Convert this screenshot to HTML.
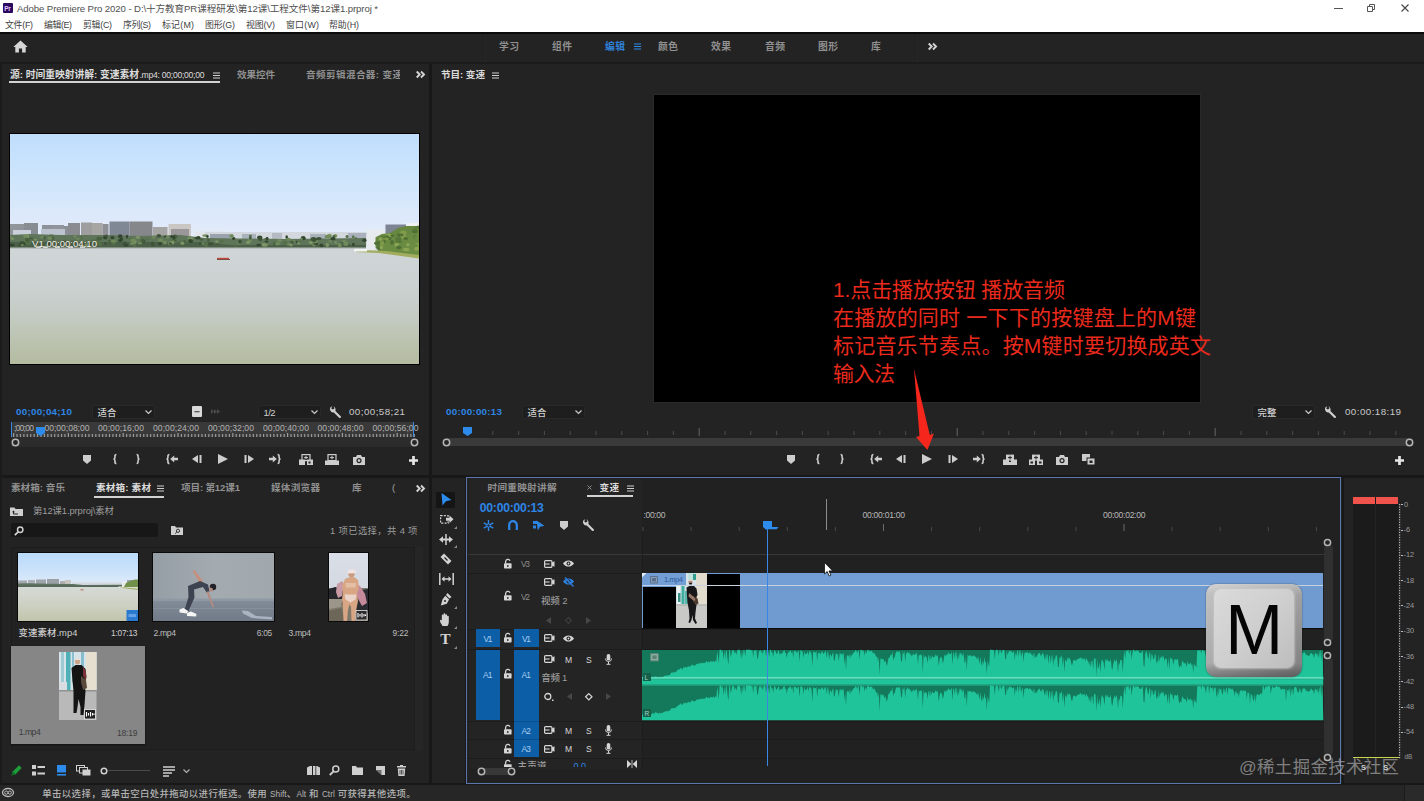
<!DOCTYPE html>
<html lang="zh-CN">
<head>
<meta charset="utf-8">
<title>Adobe Premiere Pro 2020</title>
<style>
*{box-sizing:border-box;margin:0;padding:0}
html,body{width:1424px;height:801px;overflow:hidden;background:#232323}
body{position:relative;font-family:"Liberation Sans","Noto Sans CJK SC",sans-serif;font-size:10px;color:#a7a7a7}
.a{position:absolute;white-space:nowrap}
svg{position:absolute;overflow:visible}
</style>
</head>
<body>
<!-- TITLE BAR -->
<div class="a" style="left:0px;top:0px;width:1424px;height:32px;background:#fff;"></div>
<div class="a" style="left:3px;top:3px;width:10px;height:10px;background:#2a0a5e;border-radius:1px"></div>
<div class="a" id="t1" style="top:3.5px;font-size:6.5px;line-height:9px;height:9px;color:#e4c6ff;left:4.2px;font-weight:700;letter-spacing:-.2px">Pr</div>
<div class="a" id="t2" style="top:1.9px;font-size:9.6px;line-height:13px;height:13px;color:#505050;left:17px;letter-spacing:-0.092px;">Adobe Premiere Pro 2020 - D:\十方教育PR课程研发\第12课\工程文件\第12课1.prproj *</div>
<div class="a" id="t3" style="top:18.8px;font-size:8.9px;line-height:12px;height:12px;color:#404040;left:5px;letter-spacing:-0.273px;">文件(F)</div>
<div class="a" id="t4" style="top:18.8px;font-size:8.9px;line-height:12px;height:12px;color:#404040;left:44px;letter-spacing:-0.398px;">编辑(E)</div>
<div class="a" id="t5" style="top:18.8px;font-size:8.9px;line-height:12px;height:12px;color:#404040;left:83px;letter-spacing:-0.270px;">剪辑(C)</div>
<div class="a" id="t6" style="top:18.8px;font-size:8.9px;line-height:12px;height:12px;color:#404040;left:123px;letter-spacing:-0.398px;">序列(S)</div>
<div class="a" id="t7" style="top:18.8px;font-size:8.9px;line-height:12px;height:12px;color:#404040;left:162px;letter-spacing:0.234px;">标记(M)</div>
<div class="a" id="t8" style="top:18.8px;font-size:8.9px;line-height:12px;height:12px;color:#404040;left:205px;letter-spacing:-0.145px;">图形(G)</div>
<div class="a" id="t9" style="top:18.8px;font-size:8.9px;line-height:12px;height:12px;color:#404040;left:246px;letter-spacing:-0.148px;">视图(V)</div>
<div class="a" id="t10" style="top:18.8px;font-size:8.9px;line-height:12px;height:12px;color:#404040;left:286px;letter-spacing:0.238px;">窗口(W)</div>
<div class="a" id="t11" style="top:18.8px;font-size:8.9px;line-height:12px;height:12px;color:#404040;left:329px;letter-spacing:-0.020px;">帮助(H)</div>
<svg style="left:1334px;top:8px;" width="9" height="1" viewBox="0 0 9 1"><rect width="9" height="1" fill="#555"/></svg>
<svg style="left:1367px;top:4px;" width="8" height="8" viewBox="0 0 8 8"><path d="M0.5 2.5h5v5h-5z M2.5 2.5v-2h5v5h-2" fill="none" stroke="#555" stroke-width="1"/></svg>
<svg style="left:1401px;top:4px;" width="8" height="8" viewBox="0 0 8 8"><path d="M0.5 0.5l7 7M7.5 0.5l-7 7" stroke="#444" stroke-width="1.1" fill="none"/></svg>
<!-- WORKSPACE BAR -->
<div class="a" style="left:0px;top:32px;width:1424px;height:2px;background:#0b0b0b;"></div>
<div class="a" style="left:0px;top:34px;width:1424px;height:28px;background:#232323;"></div>
<div class="a" style="left:0px;top:62px;width:1424px;height:2px;background:#1b1b1b;"></div>
<svg style="left:13px;top:40px;" width="15" height="13" viewBox="0 0 15 13"><path d="M7.5 0.5L0.3 7h2v5.5h3.6V8.6h3.2v3.9h3.6V7h2z" fill="#d6d6d6"/></svg>
<div class="a" id="t12" style="top:39.5px;font-size:9.8px;line-height:14px;height:14px;color:#909090;left:499px;font-weight:700;letter-spacing:0.406px;">学习</div>
<div class="a" id="t13" style="top:39.5px;font-size:9.8px;line-height:14px;height:14px;color:#909090;left:552px;font-weight:700;letter-spacing:0.406px;">组件</div>
<div class="a" id="t14" style="top:39.5px;font-size:9.8px;line-height:14px;height:14px;color:#2f80d8;left:605px;font-weight:700;letter-spacing:0.406px;">编辑</div>
<div class="a" id="t15" style="top:39.5px;font-size:9.8px;line-height:14px;height:14px;color:#909090;left:658px;font-weight:700;letter-spacing:0.406px;">颜色</div>
<div class="a" id="t16" style="top:39.5px;font-size:9.8px;line-height:14px;height:14px;color:#909090;left:711px;font-weight:700;letter-spacing:0.406px;">效果</div>
<div class="a" id="t17" style="top:39.5px;font-size:9.8px;line-height:14px;height:14px;color:#909090;left:765px;font-weight:700;letter-spacing:0.406px;">音频</div>
<div class="a" id="t18" style="top:39.5px;font-size:9.8px;line-height:14px;height:14px;color:#909090;left:818px;font-weight:700;letter-spacing:0.406px;">图形</div>
<div class="a" id="t19" style="top:39.5px;font-size:9.8px;line-height:14px;height:14px;color:#909090;left:871px;font-weight:700;letter-spacing:0.203px;">库</div>
<svg style="left:634px;top:43px;" width="7" height="7" viewBox="0 0 7 7"><path d="M0 1h7M0 3.5h7M0 6h7" stroke="#2d8ceb" stroke-width="1.1"/></svg>
<svg style="left:928px;top:43px;" width="9" height="7" viewBox="0 0 9 7"><path d="M0.7 0.5l3 3-3 3M5 0.5l3 3-3 3" stroke="#d4d4d4" stroke-width="1.900" fill="none"/></svg>
<div class="a" style="left:485px;top:34px;width:1px;height:28px;background:#262626;"></div>
<div class="a" style="left:917px;top:34px;width:1px;height:28px;background:#262626;"></div>
<!-- PANEL FRAMES -->
<div class="a" style="left:429px;top:64px;width:3px;height:412px;background:#181818;"></div>
<div class="a" style="left:0px;top:475px;width:1424px;height:3px;background:#181818;"></div>
<div class="a" style="left:0px;top:64px;width:2px;height:720px;background:#1b1b1b;"></div>
<!-- SOURCE MONITOR -->
<div class="a" id="t20" style="top:67.5px;font-size:9.8px;line-height:14px;height:14px;color:#dcdcdc;left:10px;font-weight:700;letter-spacing:-0.035px;">源: 时间重映射讲解: 变速素材</div>
<div class="a" id="t21" style="top:69.0px;font-size:8.6px;line-height:12px;height:12px;color:#dcdcdc;left:139.5px;font-weight:500;letter-spacing:-0.268px;">.mp4: 00;00;00;00</div>
<svg style="left:212.5px;top:71.6px;" width="7" height="7" viewBox="0 0 7 7"><path d="M0 1h7M0 3.5h7M0 6h7" stroke="#cfcfcf" stroke-width="1.1"/></svg>
<div class="a" style="left:9px;top:81px;width:211px;height:2px;background:#d2d2d2;"></div>
<div class="a" id="t22" style="top:68.0px;font-size:9.6px;line-height:13px;height:13px;color:#909090;left:237px;font-weight:700;letter-spacing:-0.125px;">效果控件</div>
<div class="a" style="left:306px;top:66px;width:94px;height:17px;overflow:hidden">
<div class="a" id="t23" style="top:2.0px;font-size:9.6px;line-height:13px;height:13px;color:#909090;left:0px;font-weight:700;letter-spacing:0.383px;">音频剪辑混合器: 变速素材</div>
</div>
<svg style="left:416px;top:71px;" width="9" height="7" viewBox="0 0 9 7"><path d="M0.7 0.5l3 3-3 3M5 0.5l3 3-3 3" stroke="#d4d4d4" stroke-width="1.900" fill="none"/></svg>
<div class="a" style="left:9px;top:133px;width:411px;height:232px;background:#000;"></div>
<svg style="left:10px;top:134px;overflow:hidden" width="409" height="230" viewBox="0 0 409 230"><defs><filter id="bl" x="-5%" y="-5%" width="110%" height="110%"><feGaussianBlur stdDeviation="0.45"/></filter><linearGradient id="sky" x1="0" y1="0" x2="0" y2="1"><stop offset="0" stop-color="#bfdefc"/><stop offset="0.35" stop-color="#cde5fc"/><stop offset="0.8" stop-color="#e0eafa"/><stop offset="1" stop-color="#e9eff8"/></linearGradient><linearGradient id="lake" x1="0" y1="0" x2="0" y2="1"><stop offset="0" stop-color="#d0d6d7"/><stop offset="0.28" stop-color="#ccd2d2"/><stop offset="0.45" stop-color="#c8cecb"/><stop offset="0.62" stop-color="#c3cac0"/><stop offset="0.8" stop-color="#bbc3b0"/><stop offset="1" stop-color="#b4bba0"/></linearGradient></defs><rect width="409" height="116" fill="url(#sky)"/><g filter="url(#bl)"><rect x="0" y="90" width="14" height="22" fill="#8f959b"/><rect x="14" y="89" width="14" height="23" fill="#878d93"/><rect x="32" y="91" width="10" height="21" fill="#8d9399"/><rect x="42" y="91" width="12" height="21" fill="#90969c"/><rect x="54" y="92" width="11" height="20" fill="#8a9096"/><rect x="3" y="96" width="18" height="16" fill="#c9d0da"/><rect x="31" y="95" width="24" height="17" fill="#bcc3cf"/><rect x="58" y="89" width="12" height="23" fill="#8a8c91"/><rect x="71" y="88.5" width="11" height="23.5" fill="#a09d9e"/><rect x="82" y="89" width="10.5" height="23" fill="#a8a5a5"/><rect x="92.5" y="90" width="6" height="22" fill="#8f9096"/><rect x="99.5" y="87.5" width="20" height="24.5" fill="#808896"/><rect x="119.5" y="87.5" width="23" height="24.5" fill="#85878b"/><rect x="143" y="93" width="14.5" height="19" fill="#a7a4a4"/><rect x="158.5" y="90" width="22.5" height="22" fill="#cac6c4"/><rect x="161" y="95" width="18" height="17" fill="#9a979a"/><rect x="185" y="97.5" width="30" height="14.5" fill="#e3e6ea"/><rect x="195" y="98" width="172" height="14" fill="#d3d8df"/><rect x="200" y="100" width="20" height="12" fill="#9aa3ad"/><rect x="232" y="100" width="14" height="12" fill="#aab2bc"/><rect x="262" y="99" width="10" height="13" fill="#b3bac3"/><rect x="300" y="100" width="16" height="12" fill="#a9b1bb"/><rect x="338" y="99" width="20" height="13" fill="#aab1bd"/><rect x="356.5" y="96" width="18.5" height="16" fill="#e8ebee"/><rect x="375.5" y="90.5" width="20.5" height="21.5" fill="#7d8595"/><rect x="396.5" y="89" width="12.5" height="23" fill="#f0f1f3"/><path d="M0 101l20-1 30 1 50 0 30 1 40-1 25 3 80 1 81-1v12H0z" fill="#5f745a"/><path d="M0 108h190l30 3h136v4H0z" fill="#4c6049"/><path d="M364 104l8-4 8-1 8-5 8-2h13v28l-45-4z" fill="#66873f"/><rect y="113.700" width="409" height="116.300" fill="url(#lake)"/><path d="M356.500 100h9v16h-9z" fill="#e8ebee"/><path d="M368 110l10-5 12-3 19-4v24l-41-5z" fill="#6b8b42"/><path d="M346 116l30 1 33 4v3.500l-40-5.500-23-1z" fill="#a3ad5e"/><path d="M344 114.500h13v3h-13z" fill="#f2f4f5"/><ellipse cx="84.7" cy="106.9" rx="2.8" ry="1.6" fill="#55704a"/><ellipse cx="206.8" cy="107.6" rx="1.7" ry="1.3" fill="#7d9566"/><ellipse cx="354.4" cy="106.2" rx="2.1" ry="1.8" fill="#33472f"/><ellipse cx="53.6" cy="107.8" rx="1.9" ry="1.0" fill="#33472f"/><ellipse cx="276.7" cy="103.1" rx="1.3" ry="1.9" fill="#33472f"/><ellipse cx="293.2" cy="104.2" rx="2.5" ry="2.1" fill="#33472f"/><ellipse cx="254.2" cy="110.7" rx="2.5" ry="1.7" fill="#7d9566"/><ellipse cx="343.2" cy="102.8" rx="1.4" ry="1.2" fill="#55704a"/><ellipse cx="77.2" cy="111.2" rx="2.6" ry="2.0" fill="#7d9566"/><ellipse cx="149.9" cy="109.8" rx="1.8" ry="1.7" fill="#33472f"/><ellipse cx="208.0" cy="110.5" rx="2.8" ry="1.0" fill="#48603f"/><ellipse cx="99.6" cy="107.6" rx="1.5" ry="2.0" fill="#48603f"/><ellipse cx="343.4" cy="110.5" rx="1.4" ry="1.8" fill="#33472f"/><ellipse cx="225.3" cy="111.4" rx="1.7" ry="1.1" fill="#55704a"/><ellipse cx="304.0" cy="111.4" rx="1.8" ry="1.1" fill="#6f8a5c"/><ellipse cx="319.4" cy="101.7" rx="2.6" ry="2.0" fill="#7d9566"/><ellipse cx="15.7" cy="107.6" rx="1.9" ry="1.7" fill="#6f8a5c"/><ellipse cx="196.1" cy="110.7" rx="2.1" ry="2.2" fill="#55704a"/><ellipse cx="110.2" cy="102.3" rx="2.2" ry="2.1" fill="#33472f"/><ellipse cx="345.8" cy="104.4" rx="1.5" ry="1.1" fill="#55704a"/><ellipse cx="308.9" cy="104.6" rx="2.8" ry="1.5" fill="#3e5238"/><ellipse cx="163.9" cy="106.7" rx="2.8" ry="1.8" fill="#48603f"/><ellipse cx="36.5" cy="111.2" rx="1.7" ry="1.8" fill="#33472f"/><ellipse cx="254.8" cy="110.9" rx="3.0" ry="1.6" fill="#7d9566"/><ellipse cx="195.2" cy="101.6" rx="3.0" ry="1.4" fill="#7d9566"/><ellipse cx="134.0" cy="107.4" rx="1.3" ry="1.8" fill="#3e5238"/><ellipse cx="166.0" cy="108.3" rx="2.3" ry="1.3" fill="#55704a"/><ellipse cx="174.3" cy="107.4" rx="1.2" ry="1.4" fill="#48603f"/><ellipse cx="223.6" cy="104.5" rx="1.8" ry="1.4" fill="#33472f"/><ellipse cx="111.3" cy="105.2" rx="1.7" ry="1.9" fill="#33472f"/><ellipse cx="37.3" cy="109.6" rx="2.4" ry="1.2" fill="#33472f"/><ellipse cx="178.0" cy="108.0" rx="1.6" ry="1.2" fill="#55704a"/><ellipse cx="154.9" cy="108.5" rx="2.3" ry="2.1" fill="#6f8a5c"/><ellipse cx="240.3" cy="103.7" rx="1.3" ry="1.9" fill="#3e5238"/><ellipse cx="77.6" cy="107.2" rx="1.6" ry="1.1" fill="#55704a"/><ellipse cx="188.5" cy="103.4" rx="1.5" ry="1.3" fill="#33472f"/><ellipse cx="287.4" cy="107.9" rx="1.8" ry="1.2" fill="#33472f"/><ellipse cx="103.9" cy="109.4" rx="2.0" ry="1.8" fill="#55704a"/><ellipse cx="103.4" cy="107.2" rx="2.9" ry="1.2" fill="#6f8a5c"/><ellipse cx="1.7" cy="110.9" rx="3.0" ry="1.5" fill="#33472f"/><ellipse cx="338.3" cy="110.8" rx="1.3" ry="1.5" fill="#3e5238"/><ellipse cx="268.2" cy="109.0" rx="2.2" ry="2.1" fill="#55704a"/><ellipse cx="306.7" cy="110.1" rx="1.4" ry="1.3" fill="#55704a"/><ellipse cx="12.5" cy="109.5" rx="2.9" ry="2.1" fill="#33472f"/><ellipse cx="320.3" cy="107.3" rx="2.1" ry="1.1" fill="#6f8a5c"/><ellipse cx="179.1" cy="103.9" rx="2.1" ry="1.5" fill="#6f8a5c"/><ellipse cx="334.3" cy="107.6" rx="1.4" ry="2.2" fill="#55704a"/><ellipse cx="192.6" cy="109.6" rx="1.8" ry="1.2" fill="#6f8a5c"/><ellipse cx="190.3" cy="109.7" rx="1.6" ry="1.3" fill="#3e5238"/><ellipse cx="316.7" cy="102.8" rx="2.1" ry="1.7" fill="#6f8a5c"/><ellipse cx="142.5" cy="109.1" rx="1.7" ry="1.6" fill="#3e5238"/><ellipse cx="150.6" cy="106.2" rx="2.7" ry="1.9" fill="#6f8a5c"/><ellipse cx="16.4" cy="102.0" rx="3.0" ry="2.0" fill="#7d9566"/><ellipse cx="30.7" cy="106.5" rx="1.5" ry="1.1" fill="#55704a"/><ellipse cx="137.3" cy="105.4" rx="1.8" ry="1.2" fill="#55704a"/><ellipse cx="117.0" cy="102.7" rx="1.2" ry="1.9" fill="#33472f"/><ellipse cx="283.1" cy="107.2" rx="1.9" ry="1.7" fill="#6f8a5c"/><ellipse cx="278.6" cy="105.3" rx="2.3" ry="1.5" fill="#6f8a5c"/><ellipse cx="132.6" cy="106.5" rx="1.8" ry="2.1" fill="#48603f"/><ellipse cx="148.9" cy="101.7" rx="2.2" ry="1.8" fill="#3e5238"/><ellipse cx="25.5" cy="105.7" rx="1.4" ry="1.0" fill="#7d9566"/><ellipse cx="115.9" cy="111.2" rx="2.6" ry="1.3" fill="#33472f"/><ellipse cx="165.2" cy="102.7" rx="2.4" ry="2.1" fill="#48603f"/><ellipse cx="282.1" cy="108.2" rx="1.8" ry="1.6" fill="#48603f"/><ellipse cx="288.9" cy="108.7" rx="1.5" ry="1.9" fill="#7d9566"/><ellipse cx="15.8" cy="102.4" rx="2.4" ry="1.5" fill="#6f8a5c"/><ellipse cx="291.7" cy="104.9" rx="1.2" ry="1.1" fill="#6f8a5c"/><ellipse cx="171.6" cy="108.5" rx="2.2" ry="2.0" fill="#55704a"/><ellipse cx="12.9" cy="109.2" rx="2.2" ry="1.3" fill="#33472f"/><ellipse cx="197.4" cy="102.5" rx="1.3" ry="1.4" fill="#33472f"/><ellipse cx="200.8" cy="109.8" rx="3.0" ry="1.8" fill="#3e5238"/><ellipse cx="161.7" cy="108.5" rx="1.7" ry="1.7" fill="#7d9566"/><ellipse cx="334.2" cy="107.1" rx="1.9" ry="1.3" fill="#6f8a5c"/><ellipse cx="330.9" cy="109.9" rx="1.9" ry="1.7" fill="#3e5238"/><ellipse cx="206.4" cy="110.7" rx="2.1" ry="1.8" fill="#48603f"/><ellipse cx="319.5" cy="103.0" rx="2.1" ry="1.6" fill="#6f8a5c"/><ellipse cx="248.7" cy="111.0" rx="2.5" ry="1.2" fill="#33472f"/><ellipse cx="95.2" cy="103.5" rx="2.1" ry="2.1" fill="#33472f"/><ellipse cx="303.1" cy="106.9" rx="2.4" ry="2.0" fill="#55704a"/><ellipse cx="211.9" cy="107.3" rx="2.8" ry="1.4" fill="#55704a"/><ellipse cx="95.4" cy="109.5" rx="1.5" ry="1.4" fill="#3e5238"/><ellipse cx="114.6" cy="109.2" rx="2.0" ry="1.8" fill="#3e5238"/><ellipse cx="249.7" cy="103.6" rx="2.7" ry="2.0" fill="#33472f"/><ellipse cx="198.3" cy="106.3" rx="1.3" ry="2.1" fill="#48603f"/><ellipse cx="278.8" cy="110.3" rx="2.0" ry="1.3" fill="#6f8a5c"/><ellipse cx="83.6" cy="108.7" rx="1.3" ry="1.3" fill="#48603f"/><ellipse cx="90.5" cy="110.4" rx="1.4" ry="1.7" fill="#55704a"/><ellipse cx="240.4" cy="101.9" rx="1.5" ry="1.1" fill="#55704a"/><ellipse cx="65.2" cy="102.4" rx="1.4" ry="1.3" fill="#6f8a5c"/><ellipse cx="325.3" cy="101.9" rx="2.2" ry="1.8" fill="#7d9566"/><ellipse cx="2.5" cy="104.8" rx="1.9" ry="1.1" fill="#7d9566"/><ellipse cx="229.4" cy="108.9" rx="1.9" ry="1.7" fill="#7d9566"/><ellipse cx="42.4" cy="104.2" rx="2.0" ry="1.5" fill="#48603f"/><ellipse cx="187.8" cy="104.0" rx="2.9" ry="1.4" fill="#33472f"/><ellipse cx="275.0" cy="109.1" rx="2.4" ry="1.8" fill="#55704a"/><ellipse cx="336.1" cy="109.7" rx="2.6" ry="2.2" fill="#6f8a5c"/><ellipse cx="239.5" cy="106.9" rx="2.4" ry="1.6" fill="#6f8a5c"/><ellipse cx="21.2" cy="104.4" rx="2.2" ry="1.2" fill="#48603f"/><ellipse cx="229.9" cy="107.8" rx="1.9" ry="2.1" fill="#3e5238"/><ellipse cx="161.7" cy="102.6" rx="1.5" ry="1.4" fill="#33472f"/><ellipse cx="256.5" cy="107.5" rx="1.7" ry="1.2" fill="#33472f"/><ellipse cx="171.7" cy="109.3" rx="1.3" ry="1.9" fill="#48603f"/><ellipse cx="268.6" cy="106.9" rx="1.9" ry="1.1" fill="#48603f"/><ellipse cx="96.4" cy="102.0" rx="1.3" ry="1.6" fill="#3e5238"/><ellipse cx="88.0" cy="109.2" rx="2.8" ry="2.1" fill="#55704a"/><ellipse cx="159.6" cy="109.6" rx="1.8" ry="2.0" fill="#6f8a5c"/><ellipse cx="39.9" cy="104.2" rx="2.4" ry="1.7" fill="#6f8a5c"/><ellipse cx="323.9" cy="102.6" rx="1.5" ry="1.5" fill="#48603f"/><ellipse cx="264.6" cy="109.7" rx="1.4" ry="1.7" fill="#48603f"/><ellipse cx="306.0" cy="109.5" rx="2.1" ry="1.7" fill="#33472f"/><ellipse cx="71.9" cy="104.0" rx="1.3" ry="2.0" fill="#55704a"/><ellipse cx="317.3" cy="111.0" rx="1.8" ry="2.1" fill="#7d9566"/><ellipse cx="110.2" cy="106.5" rx="2.4" ry="1.4" fill="#33472f"/><ellipse cx="306.2" cy="106.3" rx="1.5" ry="1.8" fill="#33472f"/><ellipse cx="38.3" cy="109.1" rx="2.1" ry="1.6" fill="#3e5238"/><ellipse cx="163.9" cy="103.4" rx="1.6" ry="2.0" fill="#33472f"/><ellipse cx="329.7" cy="111.0" rx="2.2" ry="2.2" fill="#6f8a5c"/><ellipse cx="317.6" cy="102.9" rx="2.3" ry="1.1" fill="#6f8a5c"/><ellipse cx="128.1" cy="103.8" rx="2.1" ry="1.0" fill="#6f8a5c"/><ellipse cx="120.9" cy="104.8" rx="2.5" ry="1.2" fill="#55704a"/><ellipse cx="305.6" cy="107.5" rx="2.5" ry="1.9" fill="#6f8a5c"/><ellipse cx="122.3" cy="109.6" rx="2.8" ry="1.5" fill="#6f8a5c"/><ellipse cx="269.4" cy="106.4" rx="2.6" ry="1.5" fill="#6f8a5c"/><ellipse cx="300.9" cy="108.6" rx="2.1" ry="1.8" fill="#7d9566"/><ellipse cx="191.3" cy="105.7" rx="2.1" ry="1.0" fill="#48603f"/><ellipse cx="162.9" cy="108.4" rx="1.5" ry="2.1" fill="#7d9566"/><ellipse cx="256.2" cy="105.2" rx="2.0" ry="1.4" fill="#55704a"/><ellipse cx="143.0" cy="111.2" rx="1.7" ry="1.4" fill="#3e5238"/><ellipse cx="304.5" cy="106.8" rx="1.6" ry="1.2" fill="#3e5238"/><ellipse cx="143.7" cy="103.2" rx="1.5" ry="1.7" fill="#6f8a5c"/><ellipse cx="157.6" cy="103.3" rx="1.9" ry="1.4" fill="#6f8a5c"/><ellipse cx="11.7" cy="108.6" rx="1.9" ry="1.5" fill="#3e5238"/><ellipse cx="9.5" cy="111.2" rx="1.6" ry="1.5" fill="#3e5238"/><ellipse cx="67.9" cy="104.8" rx="1.8" ry="1.1" fill="#6f8a5c"/><ellipse cx="18.5" cy="108.8" rx="3.0" ry="2.1" fill="#55704a"/><ellipse cx="281.0" cy="111.1" rx="1.6" ry="1.3" fill="#7d9566"/><ellipse cx="290.0" cy="107.8" rx="1.8" ry="1.1" fill="#55704a"/><ellipse cx="155.0" cy="102.4" rx="1.2" ry="1.0" fill="#33472f"/><ellipse cx="32.2" cy="103.2" rx="2.1" ry="1.2" fill="#6f8a5c"/><ellipse cx="181.5" cy="104.8" rx="1.8" ry="1.6" fill="#7d9566"/><ellipse cx="125.1" cy="108.1" rx="1.7" ry="1.7" fill="#7d9566"/><ellipse cx="337.0" cy="102.4" rx="1.5" ry="1.5" fill="#55704a"/><ellipse cx="180.7" cy="107.0" rx="2.4" ry="2.1" fill="#33472f"/><ellipse cx="62.2" cy="108.9" rx="1.9" ry="2.1" fill="#48603f"/><ellipse cx="127.9" cy="103.3" rx="2.0" ry="1.5" fill="#7d9566"/><ellipse cx="250.2" cy="105.0" rx="2.1" ry="1.9" fill="#3e5238"/><ellipse cx="325.8" cy="108.5" rx="1.3" ry="1.2" fill="#7d9566"/><ellipse cx="267.6" cy="109.7" rx="2.6" ry="1.8" fill="#6f8a5c"/><ellipse cx="34.6" cy="103.9" rx="1.3" ry="1.7" fill="#48603f"/><ellipse cx="17.2" cy="106.2" rx="2.4" ry="2.2" fill="#48603f"/><ellipse cx="0.6" cy="103.4" rx="1.8" ry="1.4" fill="#6f8a5c"/><ellipse cx="160.3" cy="109.7" rx="1.6" ry="1.1" fill="#3e5238"/><ellipse cx="54.4" cy="107.9" rx="3.0" ry="1.1" fill="#33472f"/><ellipse cx="102.4" cy="103.6" rx="2.1" ry="1.6" fill="#33472f"/><ellipse cx="323.0" cy="104.7" rx="2.6" ry="1.6" fill="#33472f"/><ellipse cx="221.6" cy="101.9" rx="2.3" ry="2.0" fill="#6f8a5c"/><ellipse cx="36.1" cy="110.9" rx="1.4" ry="1.6" fill="#55704a"/><ellipse cx="79.3" cy="109.8" rx="1.4" ry="1.6" fill="#33472f"/><ellipse cx="238.0" cy="108.5" rx="2.3" ry="1.5" fill="#7d9566"/><ellipse cx="39.5" cy="109.9" rx="2.0" ry="1.5" fill="#33472f"/><ellipse cx="41.6" cy="101.6" rx="2.5" ry="1.1" fill="#55704a"/><ellipse cx="123.2" cy="106.3" rx="2.9" ry="1.8" fill="#6f8a5c"/><ellipse cx="129.8" cy="109.3" rx="2.3" ry="1.3" fill="#6f8a5c"/><ellipse cx="124.8" cy="111.5" rx="1.6" ry="1.5" fill="#55704a"/><ellipse cx="89.3" cy="104.7" rx="2.9" ry="1.9" fill="#48603f"/><ellipse cx="311.4" cy="111.4" rx="2.0" ry="1.9" fill="#33472f"/><ellipse cx="303.5" cy="105.2" rx="2.8" ry="2.1" fill="#3e5238"/><ellipse cx="172.4" cy="109.2" rx="2.0" ry="1.7" fill="#7d9566"/><ellipse cx="12.4" cy="111.1" rx="1.5" ry="1.1" fill="#6f8a5c"/><ellipse cx="257.2" cy="104.4" rx="1.3" ry="1.6" fill="#33472f"/><ellipse cx="374.4" cy="105.2" rx="2.4" ry="1.6" fill="#4f6f35"/><ellipse cx="397.9" cy="110.8" rx="1.8" ry="1.8" fill="#8aa552"/><ellipse cx="405.1" cy="103.3" rx="1.8" ry="2.2" fill="#58783a"/><ellipse cx="396.1" cy="115.5" rx="3.4" ry="1.8" fill="#8aa552"/><ellipse cx="406.4" cy="103.8" rx="1.9" ry="2.4" fill="#6b8b42"/><ellipse cx="378.4" cy="101.6" rx="3.3" ry="2.2" fill="#8aa552"/><ellipse cx="378.8" cy="104.7" rx="1.5" ry="1.4" fill="#6b8b42"/><ellipse cx="388.8" cy="107.7" rx="3.4" ry="1.2" fill="#58783a"/><ellipse cx="408.3" cy="111.1" rx="3.5" ry="2.2" fill="#8aa552"/><ellipse cx="408.1" cy="93.1" rx="2.0" ry="1.6" fill="#58783a"/><ellipse cx="404.9" cy="112.3" rx="2.6" ry="1.3" fill="#6b8b42"/><ellipse cx="379.4" cy="104.6" rx="2.3" ry="1.5" fill="#4f6f35"/><ellipse cx="367.9" cy="109.3" rx="3.3" ry="2.3" fill="#58783a"/><ellipse cx="376.6" cy="103.6" rx="2.5" ry="2.3" fill="#4f6f35"/><ellipse cx="389.7" cy="102.9" rx="1.6" ry="1.8" fill="#58783a"/><ellipse cx="368.6" cy="113.8" rx="2.4" ry="2.1" fill="#4f6f35"/><ellipse cx="405.9" cy="111.7" rx="2.5" ry="1.7" fill="#6b8b42"/><ellipse cx="393.2" cy="102.4" rx="2.9" ry="2.5" fill="#7f9a4a"/><ellipse cx="389.5" cy="105.3" rx="2.4" ry="1.6" fill="#8aa552"/><ellipse cx="377.0" cy="105.7" rx="1.8" ry="1.6" fill="#6b8b42"/><ellipse cx="388.4" cy="105.5" rx="3.2" ry="2.4" fill="#58783a"/><ellipse cx="392.3" cy="97.6" rx="2.7" ry="1.4" fill="#6b8b42"/><ellipse cx="371.4" cy="113.3" rx="1.7" ry="2.1" fill="#8aa552"/><ellipse cx="382.0" cy="108.3" rx="1.9" ry="2.4" fill="#4f6f35"/><ellipse cx="373.8" cy="107.7" rx="2.1" ry="1.6" fill="#4f6f35"/><ellipse cx="406.8" cy="114.7" rx="2.7" ry="1.9" fill="#8aa552"/><ellipse cx="367.5" cy="109.3" rx="3.5" ry="1.3" fill="#4f6f35"/><ellipse cx="375.9" cy="104.7" rx="2.9" ry="1.3" fill="#7f9a4a"/><ellipse cx="393.2" cy="99.1" rx="3.4" ry="2.5" fill="#7f9a4a"/><ellipse cx="395.8" cy="104.6" rx="2.4" ry="1.6" fill="#4f6f35"/><ellipse cx="390.1" cy="100.9" rx="3.4" ry="1.4" fill="#4f6f35"/><ellipse cx="404.9" cy="97.3" rx="2.8" ry="2.0" fill="#4f6f35"/><ellipse cx="372.1" cy="103.8" rx="2.1" ry="2.0" fill="#58783a"/><ellipse cx="371.6" cy="105.1" rx="3.4" ry="1.9" fill="#6b8b42"/><ellipse cx="382.4" cy="101.7" rx="1.9" ry="1.2" fill="#4f6f35"/><ellipse cx="370.5" cy="105.0" rx="1.8" ry="1.7" fill="#8aa552"/><ellipse cx="405.3" cy="94.9" rx="1.5" ry="1.7" fill="#58783a"/><ellipse cx="372.1" cy="109.3" rx="2.2" ry="2.4" fill="#7f9a4a"/><ellipse cx="386.9" cy="110.9" rx="2.4" ry="2.2" fill="#8aa552"/><ellipse cx="388.8" cy="113.4" rx="2.6" ry="1.8" fill="#4f6f35"/><rect x="0" y="113.200" width="356" height="1.300" fill="#8f9a8c" opacity=".7"/><rect x="26" y="112.300" width="5" height="1.600" fill="#e4e7e6"/><rect x="33" y="112.300" width="5" height="1.600" fill="#e4e7e6"/><rect x="45" y="112.300" width="5" height="1.600" fill="#e4e7e6"/><rect x="58" y="112.300" width="5" height="1.600" fill="#e4e7e6"/><rect x="70" y="112.300" width="5" height="1.600" fill="#e4e7e6"/></g><rect x="207" y="123.800" width="12" height="1.200" fill="#c04a3e"/><rect x="207" y="125" width="13" height="1" fill="#7d4a44"/></svg>
<div class="a" id="t24" style="top:237.0px;font-size:9.6px;line-height:13px;height:13px;color:#f3f0e6;left:32px;letter-spacing:-0.007px;text-shadow:0 0 2px rgba(60,60,50,.8)">V1 00:00:04:10</div>
<div class="a" id="t25" style="top:405.0px;font-size:9.8px;line-height:14px;height:14px;color:#2d86e6;left:16px;font-weight:700;letter-spacing:0.261px;">00;00;04;10</div>
<div class="a" style="left:92px;top:405px;width:63px;height:14px;background:#1e1e1e;border:1px solid #292929;border-radius:2px"></div>
<div class="a" id="t26" style="top:405.7px;font-size:9.4px;line-height:13px;height:13px;color:#d0d0d0;left:97.5px;font-weight:500;letter-spacing:0.234px;">适合</div>
<svg style="left:145px;top:410.0px;" width="7" height="4" viewBox="0 0 7 4"><path d="M0.5 0.5l3 3 3-3" stroke="#c8c8c8" stroke-width="1.2" fill="none"/></svg>
<div class="a" style="left:258px;top:405px;width:63px;height:14px;background:#1e1e1e;border:1px solid #292929;border-radius:2px"></div>
<div class="a" id="t27" style="top:405.7px;font-size:9.4px;line-height:13px;height:13px;color:#d0d0d0;left:263.5px;font-weight:500;letter-spacing:-0.523px;">1/2</div>
<svg style="left:311px;top:410.0px;" width="7" height="4" viewBox="0 0 7 4"><path d="M0.5 0.5l3 3 3-3" stroke="#c8c8c8" stroke-width="1.2" fill="none"/></svg>
<svg style="left:192px;top:406px;" width="10" height="11" viewBox="0 0 10 11"><rect width="10" height="11" rx="1" fill="#d9d9d9"/><rect x="2.5" y="5" width="5" height="1.3" fill="#555"/></svg>
<svg style="left:211px;top:409px;" width="9" height="5" viewBox="0 0 9 5"><path d="M0 0l3 2.5-3 2.5zM3 0l3 2.5-3 2.5zM6 0l3 2.5-3 2.5z" fill="#4a4a4a"/></svg>
<svg style="left:330px;top:406px;" width="12" height="12" viewBox="0 0 12 12"><path d="M2.2 0.3a3.2 3.2 0 0 0-1.9 4.2 3.2 3.2 0 0 0 3.5 1.9l5.3 5.3a1 1 0 0 0 1.6-1.5L5.4 4.9a3.2 3.2 0 0 0-.6-3.3A3.2 3.2 0 0 0 3.6.2l.9 2.3-1.7 1-1.6-.9z" fill="#cfcfcf"/></svg>
<div class="a" id="t28" style="top:405.0px;font-size:9.8px;line-height:14px;height:14px;color:#c9c9c9;left:349px;font-weight:500;letter-spacing:0.423px;">00;00;58;21</div>
<div class="a" style="left:11px;top:422px;width:403px;height:15px;background:#393939;"></div>
<div class="a" style="left:11px;top:437px;width:403px;height:10px;background:#2c2c2c;"></div>
<div class="a" id="t29" style="top:422.3px;font-size:8.6px;line-height:12px;height:12px;color:#b2b2b2;left:14px;letter-spacing:-0.781px;">;00;00</div>
<div class="a" id="t30" style="top:422.3px;font-size:8.6px;line-height:12px;height:12px;color:#b2b2b2;left:44.5px;letter-spacing:-0.041px;">00;00;08;00</div>
<div class="a" id="t31" style="top:422.3px;font-size:8.6px;line-height:12px;height:12px;color:#b2b2b2;left:98px;letter-spacing:0.059px;">00;00;16;00</div>
<div class="a" id="t32" style="top:422.3px;font-size:8.6px;line-height:12px;height:12px;color:#b2b2b2;left:153px;letter-spacing:0.059px;">00;00;24;00</div>
<div class="a" id="t33" style="top:422.3px;font-size:8.6px;line-height:12px;height:12px;color:#b2b2b2;left:208px;letter-spacing:0.059px;">00;00;32;00</div>
<div class="a" id="t34" style="top:422.3px;font-size:8.6px;line-height:12px;height:12px;color:#b2b2b2;left:263px;letter-spacing:0.059px;">00;00;40;00</div>
<div class="a" id="t35" style="top:422.3px;font-size:8.6px;line-height:12px;height:12px;color:#b2b2b2;left:317.5px;letter-spacing:0.059px;">00;00;48;00</div>
<div class="a" id="t36" style="top:422.3px;font-size:8.6px;line-height:12px;height:12px;color:#b2b2b2;left:372.5px;letter-spacing:0.059px;">00;00;56;00</div>
<svg style="left:13px;top:433px;" width="403" height="4" viewBox="0 0 403 4"><rect x="0.00" y="0" width="1.200" height="4" fill="#9a9a9a"/><rect x="3.42" y="1" width="1.200" height="3" fill="#9a9a9a"/><rect x="6.85" y="1" width="1.200" height="3" fill="#9a9a9a"/><rect x="10.27" y="1" width="1.200" height="3" fill="#9a9a9a"/><rect x="13.70" y="1" width="1.200" height="3" fill="#9a9a9a"/><rect x="17.12" y="1" width="1.200" height="3" fill="#9a9a9a"/><rect x="20.55" y="1" width="1.200" height="3" fill="#9a9a9a"/><rect x="23.97" y="1" width="1.200" height="3" fill="#9a9a9a"/><rect x="27.40" y="1" width="1.200" height="3" fill="#9a9a9a"/><rect x="30.82" y="1" width="1.200" height="3" fill="#9a9a9a"/><rect x="34.25" y="1" width="1.200" height="3" fill="#9a9a9a"/><rect x="37.67" y="1" width="1.200" height="3" fill="#9a9a9a"/><rect x="41.10" y="1" width="1.200" height="3" fill="#9a9a9a"/><rect x="44.52" y="1" width="1.200" height="3" fill="#9a9a9a"/><rect x="47.95" y="1" width="1.200" height="3" fill="#9a9a9a"/><rect x="51.38" y="1" width="1.200" height="3" fill="#9a9a9a"/><rect x="54.80" y="0" width="1.200" height="4" fill="#9a9a9a"/><rect x="58.22" y="1" width="1.200" height="3" fill="#9a9a9a"/><rect x="61.65" y="1" width="1.200" height="3" fill="#9a9a9a"/><rect x="65.08" y="1" width="1.200" height="3" fill="#9a9a9a"/><rect x="68.50" y="1" width="1.200" height="3" fill="#9a9a9a"/><rect x="71.92" y="1" width="1.200" height="3" fill="#9a9a9a"/><rect x="75.35" y="1" width="1.200" height="3" fill="#9a9a9a"/><rect x="78.77" y="1" width="1.200" height="3" fill="#9a9a9a"/><rect x="82.20" y="1" width="1.200" height="3" fill="#9a9a9a"/><rect x="85.62" y="1" width="1.200" height="3" fill="#9a9a9a"/><rect x="89.05" y="1" width="1.200" height="3" fill="#9a9a9a"/><rect x="92.47" y="1" width="1.200" height="3" fill="#9a9a9a"/><rect x="95.90" y="1" width="1.200" height="3" fill="#9a9a9a"/><rect x="99.32" y="1" width="1.200" height="3" fill="#9a9a9a"/><rect x="102.75" y="1" width="1.200" height="3" fill="#9a9a9a"/><rect x="106.17" y="1" width="1.200" height="3" fill="#9a9a9a"/><rect x="109.60" y="0" width="1.200" height="4" fill="#9a9a9a"/><rect x="113.02" y="1" width="1.200" height="3" fill="#9a9a9a"/><rect x="116.45" y="1" width="1.200" height="3" fill="#9a9a9a"/><rect x="119.88" y="1" width="1.200" height="3" fill="#9a9a9a"/><rect x="123.30" y="1" width="1.200" height="3" fill="#9a9a9a"/><rect x="126.72" y="1" width="1.200" height="3" fill="#9a9a9a"/><rect x="130.15" y="1" width="1.200" height="3" fill="#9a9a9a"/><rect x="133.57" y="1" width="1.200" height="3" fill="#9a9a9a"/><rect x="137.00" y="1" width="1.200" height="3" fill="#9a9a9a"/><rect x="140.42" y="1" width="1.200" height="3" fill="#9a9a9a"/><rect x="143.85" y="1" width="1.200" height="3" fill="#9a9a9a"/><rect x="147.28" y="1" width="1.200" height="3" fill="#9a9a9a"/><rect x="150.70" y="1" width="1.200" height="3" fill="#9a9a9a"/><rect x="154.12" y="1" width="1.200" height="3" fill="#9a9a9a"/><rect x="157.55" y="1" width="1.200" height="3" fill="#9a9a9a"/><rect x="160.97" y="1" width="1.200" height="3" fill="#9a9a9a"/><rect x="164.40" y="0" width="1.200" height="4" fill="#9a9a9a"/><rect x="167.82" y="1" width="1.200" height="3" fill="#9a9a9a"/><rect x="171.25" y="1" width="1.200" height="3" fill="#9a9a9a"/><rect x="174.67" y="1" width="1.200" height="3" fill="#9a9a9a"/><rect x="178.10" y="1" width="1.200" height="3" fill="#9a9a9a"/><rect x="181.52" y="1" width="1.200" height="3" fill="#9a9a9a"/><rect x="184.95" y="1" width="1.200" height="3" fill="#9a9a9a"/><rect x="188.38" y="1" width="1.200" height="3" fill="#9a9a9a"/><rect x="191.80" y="1" width="1.200" height="3" fill="#9a9a9a"/><rect x="195.22" y="1" width="1.200" height="3" fill="#9a9a9a"/><rect x="198.65" y="1" width="1.200" height="3" fill="#9a9a9a"/><rect x="202.07" y="1" width="1.200" height="3" fill="#9a9a9a"/><rect x="205.50" y="1" width="1.200" height="3" fill="#9a9a9a"/><rect x="208.92" y="1" width="1.200" height="3" fill="#9a9a9a"/><rect x="212.35" y="1" width="1.200" height="3" fill="#9a9a9a"/><rect x="215.77" y="1" width="1.200" height="3" fill="#9a9a9a"/><rect x="219.20" y="0" width="1.200" height="4" fill="#9a9a9a"/><rect x="222.62" y="1" width="1.200" height="3" fill="#9a9a9a"/><rect x="226.05" y="1" width="1.200" height="3" fill="#9a9a9a"/><rect x="229.47" y="1" width="1.200" height="3" fill="#9a9a9a"/><rect x="232.90" y="1" width="1.200" height="3" fill="#9a9a9a"/><rect x="236.32" y="1" width="1.200" height="3" fill="#9a9a9a"/><rect x="239.75" y="1" width="1.200" height="3" fill="#9a9a9a"/><rect x="243.17" y="1" width="1.200" height="3" fill="#9a9a9a"/><rect x="246.60" y="1" width="1.200" height="3" fill="#9a9a9a"/><rect x="250.02" y="1" width="1.200" height="3" fill="#9a9a9a"/><rect x="253.45" y="1" width="1.200" height="3" fill="#9a9a9a"/><rect x="256.88" y="1" width="1.200" height="3" fill="#9a9a9a"/><rect x="260.30" y="1" width="1.200" height="3" fill="#9a9a9a"/><rect x="263.72" y="1" width="1.200" height="3" fill="#9a9a9a"/><rect x="267.15" y="1" width="1.200" height="3" fill="#9a9a9a"/><rect x="270.57" y="1" width="1.200" height="3" fill="#9a9a9a"/><rect x="274.00" y="0" width="1.200" height="4" fill="#9a9a9a"/><rect x="277.43" y="1" width="1.200" height="3" fill="#9a9a9a"/><rect x="280.85" y="1" width="1.200" height="3" fill="#9a9a9a"/><rect x="284.27" y="1" width="1.200" height="3" fill="#9a9a9a"/><rect x="287.70" y="1" width="1.200" height="3" fill="#9a9a9a"/><rect x="291.12" y="1" width="1.200" height="3" fill="#9a9a9a"/><rect x="294.55" y="1" width="1.200" height="3" fill="#9a9a9a"/><rect x="297.97" y="1" width="1.200" height="3" fill="#9a9a9a"/><rect x="301.40" y="1" width="1.200" height="3" fill="#9a9a9a"/><rect x="304.82" y="1" width="1.200" height="3" fill="#9a9a9a"/><rect x="308.25" y="1" width="1.200" height="3" fill="#9a9a9a"/><rect x="311.68" y="1" width="1.200" height="3" fill="#9a9a9a"/><rect x="315.10" y="1" width="1.200" height="3" fill="#9a9a9a"/><rect x="318.52" y="1" width="1.200" height="3" fill="#9a9a9a"/><rect x="321.95" y="1" width="1.200" height="3" fill="#9a9a9a"/><rect x="325.38" y="1" width="1.200" height="3" fill="#9a9a9a"/><rect x="328.80" y="0" width="1.200" height="4" fill="#9a9a9a"/><rect x="332.22" y="1" width="1.200" height="3" fill="#9a9a9a"/><rect x="335.65" y="1" width="1.200" height="3" fill="#9a9a9a"/><rect x="339.07" y="1" width="1.200" height="3" fill="#9a9a9a"/><rect x="342.50" y="1" width="1.200" height="3" fill="#9a9a9a"/><rect x="345.92" y="1" width="1.200" height="3" fill="#9a9a9a"/><rect x="349.35" y="1" width="1.200" height="3" fill="#9a9a9a"/><rect x="352.77" y="1" width="1.200" height="3" fill="#9a9a9a"/><rect x="356.20" y="1" width="1.200" height="3" fill="#9a9a9a"/><rect x="359.62" y="1" width="1.200" height="3" fill="#9a9a9a"/><rect x="363.05" y="1" width="1.200" height="3" fill="#9a9a9a"/><rect x="366.47" y="1" width="1.200" height="3" fill="#9a9a9a"/><rect x="369.90" y="1" width="1.200" height="3" fill="#9a9a9a"/><rect x="373.32" y="1" width="1.200" height="3" fill="#9a9a9a"/><rect x="376.75" y="1" width="1.200" height="3" fill="#9a9a9a"/><rect x="380.17" y="1" width="1.200" height="3" fill="#9a9a9a"/><rect x="383.60" y="0" width="1.200" height="4" fill="#9a9a9a"/><rect x="387.02" y="1" width="1.200" height="3" fill="#9a9a9a"/><rect x="390.45" y="1" width="1.200" height="3" fill="#9a9a9a"/><rect x="393.88" y="1" width="1.200" height="3" fill="#9a9a9a"/><rect x="397.30" y="1" width="1.200" height="3" fill="#9a9a9a"/><rect x="400.72" y="1" width="1.200" height="3" fill="#9a9a9a"/></svg>
<div class="a" style="left:11px;top:422px;width:1px;height:15px;background:#3a86e0;"></div>
<div class="a" style="left:413px;top:422px;width:1px;height:15px;background:#3a86e0;"></div>
<svg style="left:36px;top:427px;" width="9" height="9" viewBox="0 0 9 9"><path d="M0 0h9v6l-4.5 3L0 6z" fill="#2d8ceb"/></svg>
<svg style="left:11px;top:438px;" width="9" height="9" viewBox="0 0 9 9"><circle cx="4.5" cy="4.5" r="3.2" fill="#262626" stroke="#b5b5b5" stroke-width="1.5"/></svg>
<svg style="left:410px;top:438px;" width="9" height="9" viewBox="0 0 9 9"><circle cx="4.5" cy="4.5" r="3.2" fill="#262626" stroke="#b5b5b5" stroke-width="1.5"/></svg>
<svg style="left:83px;top:454.8px;" width="8" height="9" viewBox="0 0 8 9"><path d="M0 0h8v5.5l-4 3.5-4-3.5z" fill="#cdcdcd"/></svg>
<svg style="left:113px;top:454.3px;" width="4" height="10" viewBox="0 0 4 10"><path d="M3.400 0.500C1.900 0.500 1.900 1.100 1.900 2.300V3.700C1.900 4.600 1.300 5 0.400 5 1.300 5 1.900 5.400 1.900 6.300V7.700C1.900 8.900 1.900 9.500 3.400 9.500" stroke="#cdcdcd" stroke-width="1.600" fill="none"/></svg>
<svg style="left:136px;top:454.3px;" width="4" height="10" viewBox="0 0 4 10"><path d="M0.600 0.500C2.100 0.500 2.100 1.100 2.100 2.300V3.700C2.100 4.600 2.700 5 3.600 5 2.700 5 2.100 5.400 2.100 6.300V7.700C2.100 8.900 2.100 9.500 0.600 9.500" stroke="#cdcdcd" stroke-width="1.600" fill="none"/></svg>
<svg style="left:166px;top:454.3px;" width="12" height="10" viewBox="0 0 12 10"><path d="M3.400 0.500C1.900 0.500 1.900 1.100 1.900 2.300V3.700C1.900 4.600 1.300 5 0.400 5 1.300 5 1.900 5.400 1.900 6.300V7.700C1.900 8.900 1.900 9.500 3.400 9.500" stroke="#cdcdcd" stroke-width="1.600" fill="none"/><path d="M4.200 5l4-3.600v2.400h3.800v2.400h-3.800v2.400z" fill="#cdcdcd"/></svg>
<svg style="left:192px;top:455.3px;" width="10" height="8" viewBox="0 0 10 8"><path d="M0 4l6-4v8z" fill="#cdcdcd"/><rect x="7.5" width="2" height="8" fill="#cdcdcd"/></svg>
<svg style="left:217.5px;top:454.3px;" width="10" height="10" viewBox="0 0 10 10"><path d="M0 0l10 5-10 5z" fill="#cdcdcd"/></svg>
<svg style="left:244px;top:455.3px;" width="10" height="8" viewBox="0 0 10 8"><path d="M10 4l-6-4v8z" fill="#cdcdcd"/><rect x="0.5" width="2" height="8" fill="#cdcdcd"/></svg>
<svg style="left:269px;top:454.3px;" width="12" height="10" viewBox="0 0 12 10"><g transform="translate(8 0)"><path d="M0.600 0.500C2.100 0.500 2.100 1.100 2.100 2.300V3.700C2.100 4.600 2.700 5 3.600 5 2.700 5 2.100 5.400 2.100 6.300V7.700C2.100 8.900 2.100 9.500 0.600 9.500" stroke="#cdcdcd" stroke-width="1.600" fill="none"/></g><path d="M7.800 5l-4-3.600v2.400h-3.800v2.400h3.800v2.400z" fill="#cdcdcd"/></svg>
<svg style="left:299px;top:453.8px;" width="14" height="11" viewBox="0 0 14 11"><rect x="3" y="0.6" width="8" height="6" fill="none" stroke="#cdcdcd" stroke-width="1.2"/><path d="M5 3.6h4M7 1.8v3.6" stroke="#cdcdcd" stroke-width="1"/><rect x="0" y="5.5" width="6" height="5.5" fill="#cdcdcd"/><rect x="8" y="5.5" width="6" height="5.5" fill="#cdcdcd"/><rect x="9.5" y="7.5" width="2" height="2" fill="#232323"/></svg>
<svg style="left:325px;top:453.8px;" width="14" height="11" viewBox="0 0 14 11"><rect x="3" y="0.6" width="8" height="6" fill="none" stroke="#cdcdcd" stroke-width="1.2"/><path d="M5 3.6h4M7 1.8v3.6" stroke="#cdcdcd" stroke-width="1"/><rect x="0" y="6.5" width="14" height="4.5" fill="#cdcdcd"/></svg>
<svg style="left:353px;top:454.8px;" width="12" height="10" viewBox="0 0 12 10"><path d="M0 2h3l1-2h4l1 2h3v8H0z" fill="#cdcdcd"/><circle cx="6" cy="5.6" r="2" fill="none" stroke="#232323" stroke-width="1.2"/></svg>
<svg style="left:408.5px;top:456.2px;" width="9" height="9" viewBox="0 0 9 9"><path d="M4.500 0v9M0 4.500h9" stroke="#e6e6e6" stroke-width="2.700"/></svg>
<!-- PROGRAM MONITOR -->
<div class="a" id="t37" style="top:68.0px;font-size:9.6px;line-height:13px;height:13px;color:#dcdcdc;left:441px;font-weight:700;letter-spacing:-0.050px;">节目: 变速</div>
<svg style="left:492px;top:71.6px;" width="7" height="7" viewBox="0 0 7 7"><path d="M0 1h7M0 3.5h7M0 6h7" stroke="#cfcfcf" stroke-width="1.1"/></svg>
<div class="a" style="left:653px;top:94px;width:548px;height:309px;background:#2a2a2a;"></div>
<div class="a" style="left:654px;top:95px;width:546px;height:307px;background:#000;"></div>
<div class="a" id="t38" style="top:275.5px;font-size:21px;line-height:28px;height:28px;color:#ea2a1c;left:833px;letter-spacing:-0.113px;">1.点击播放按钮 播放音频</div>
<div class="a" id="t39" style="top:303.6px;font-size:21px;line-height:28px;height:28px;color:#ea2a1c;left:833px;letter-spacing:0.216px;">在播放的同时 一下下的按键盘上的M键</div>
<div class="a" id="t40" style="top:331.7px;font-size:21px;line-height:28px;height:28px;color:#ea2a1c;left:833px;letter-spacing:0.206px;">标记音乐节奏点。按M键时要切换成英文</div>
<div class="a" id="t41" style="top:359.8px;font-size:21px;line-height:28px;height:28px;color:#ea2a1c;left:833px;letter-spacing:-0.500px;">输入法</div>
<div class="a" id="t42" style="top:405.0px;font-size:9.8px;line-height:14px;height:14px;color:#2d86e6;left:446px;font-weight:700;letter-spacing:0.261px;">00:00:00:13</div>
<div class="a" style="left:522px;top:405px;width:63px;height:14px;background:#1e1e1e;border:1px solid #292929;border-radius:2px"></div>
<div class="a" id="t43" style="top:405.7px;font-size:9.4px;line-height:13px;height:13px;color:#d0d0d0;left:527.5px;font-weight:500;letter-spacing:0.234px;">适合</div>
<svg style="left:575px;top:410.0px;" width="7" height="4" viewBox="0 0 7 4"><path d="M0.5 0.5l3 3 3-3" stroke="#c8c8c8" stroke-width="1.2" fill="none"/></svg>
<div class="a" style="left:1252px;top:405px;width:63px;height:14px;background:#1e1e1e;border:1px solid #292929;border-radius:2px"></div>
<div class="a" id="t44" style="top:405.7px;font-size:9.4px;line-height:13px;height:13px;color:#d0d0d0;left:1257.5px;font-weight:500;letter-spacing:0.234px;">完整</div>
<svg style="left:1305px;top:410.0px;" width="7" height="4" viewBox="0 0 7 4"><path d="M0.5 0.5l3 3 3-3" stroke="#c8c8c8" stroke-width="1.2" fill="none"/></svg>
<svg style="left:1325px;top:406px;" width="12" height="12" viewBox="0 0 12 12"><path d="M2.2 0.3a3.2 3.2 0 0 0-1.9 4.2 3.2 3.2 0 0 0 3.5 1.9l5.3 5.3a1 1 0 0 0 1.6-1.5L5.4 4.9a3.2 3.2 0 0 0-.6-3.3A3.2 3.2 0 0 0 3.6.2l.9 2.3-1.7 1-1.6-.9z" fill="#cfcfcf"/></svg>
<div class="a" id="t45" style="top:405.0px;font-size:9.8px;line-height:14px;height:14px;color:#c9c9c9;left:1345px;font-weight:500;letter-spacing:0.423px;">00:00:18:19</div>
<svg style="left:446px;top:428px;" width="970" height="8" viewBox="0 0 970 8"><rect x="20.5" y="3" width="1" height="4" fill="#4c4c4c"/><rect x="46.3" y="3" width="1" height="4" fill="#4c4c4c"/><rect x="72.1" y="3" width="1" height="4" fill="#4c4c4c"/><rect x="97.9" y="3" width="1" height="4" fill="#4c4c4c"/><rect x="123.7" y="3" width="1" height="4" fill="#4c4c4c"/><rect x="149.5" y="3" width="1" height="4" fill="#4c4c4c"/><rect x="175.3" y="3" width="1" height="4" fill="#4c4c4c"/><rect x="201.1" y="3" width="1" height="4" fill="#4c4c4c"/><rect x="226.9" y="3" width="1" height="4" fill="#4c4c4c"/><rect x="252.7" y="0" width="1" height="8" fill="#666"/><rect x="278.5" y="3" width="1" height="4" fill="#4c4c4c"/><rect x="304.3" y="3" width="1" height="4" fill="#4c4c4c"/><rect x="330.1" y="3" width="1" height="4" fill="#4c4c4c"/><rect x="355.9" y="3" width="1" height="4" fill="#4c4c4c"/><rect x="381.7" y="3" width="1" height="4" fill="#4c4c4c"/><rect x="407.5" y="3" width="1" height="4" fill="#4c4c4c"/><rect x="433.3" y="3" width="1" height="4" fill="#4c4c4c"/><rect x="459.1" y="3" width="1" height="4" fill="#4c4c4c"/><rect x="484.9" y="3" width="1" height="4" fill="#4c4c4c"/><rect x="510.7" y="0" width="1" height="8" fill="#666"/><rect x="536.5" y="3" width="1" height="4" fill="#4c4c4c"/><rect x="562.3" y="3" width="1" height="4" fill="#4c4c4c"/><rect x="588.1" y="3" width="1" height="4" fill="#4c4c4c"/><rect x="613.9" y="3" width="1" height="4" fill="#4c4c4c"/><rect x="639.7" y="3" width="1" height="4" fill="#4c4c4c"/><rect x="665.5" y="3" width="1" height="4" fill="#4c4c4c"/><rect x="691.3" y="3" width="1" height="4" fill="#4c4c4c"/><rect x="717.1" y="3" width="1" height="4" fill="#4c4c4c"/><rect x="742.9" y="3" width="1" height="4" fill="#4c4c4c"/><rect x="768.7" y="0" width="1" height="8" fill="#666"/><rect x="794.5" y="3" width="1" height="4" fill="#4c4c4c"/><rect x="820.3" y="3" width="1" height="4" fill="#4c4c4c"/><rect x="846.1" y="3" width="1" height="4" fill="#4c4c4c"/><rect x="871.9" y="3" width="1" height="4" fill="#4c4c4c"/><rect x="897.7" y="3" width="1" height="4" fill="#4c4c4c"/><rect x="923.5" y="3" width="1" height="4" fill="#4c4c4c"/><rect x="949.3" y="3" width="1" height="4" fill="#4c4c4c"/></svg>
<div class="a" style="left:444px;top:438px;width:968px;height:8px;background:#3a3a3a;border-radius:4px"></div>
<svg style="left:441.5px;top:437.5px;" width="9" height="9" viewBox="0 0 9 9"><circle cx="4.5" cy="4.5" r="3.2" fill="#262626" stroke="#b5b5b5" stroke-width="1.5"/></svg>
<svg style="left:1404.5px;top:437.5px;" width="9" height="9" viewBox="0 0 9 9"><circle cx="4.5" cy="4.5" r="3.2" fill="#262626" stroke="#b5b5b5" stroke-width="1.5"/></svg>
<svg style="left:463px;top:427px;" width="9" height="9" viewBox="0 0 9 9"><path d="M0 0h9v6l-4.500 3L0 6z" fill="#2d8ceb"/></svg>
<svg style="left:787px;top:454.8px;" width="8" height="9" viewBox="0 0 8 9"><path d="M0 0h8v5.5l-4 3.5-4-3.5z" fill="#cdcdcd"/></svg>
<svg style="left:816px;top:454.3px;" width="4" height="10" viewBox="0 0 4 10"><path d="M3.400 0.500C1.900 0.500 1.900 1.100 1.900 2.300V3.700C1.900 4.600 1.300 5 0.400 5 1.300 5 1.900 5.400 1.900 6.300V7.700C1.900 8.900 1.900 9.500 3.400 9.500" stroke="#cdcdcd" stroke-width="1.600" fill="none"/></svg>
<svg style="left:840px;top:454.3px;" width="4" height="10" viewBox="0 0 4 10"><path d="M0.600 0.500C2.100 0.500 2.100 1.100 2.100 2.300V3.700C2.100 4.600 2.700 5 3.600 5 2.700 5 2.100 5.400 2.100 6.300V7.700C2.100 8.900 2.100 9.500 0.600 9.500" stroke="#cdcdcd" stroke-width="1.600" fill="none"/></svg>
<svg style="left:870px;top:454.3px;" width="12" height="10" viewBox="0 0 12 10"><path d="M3.400 0.500C1.900 0.500 1.900 1.100 1.900 2.300V3.700C1.900 4.600 1.300 5 0.400 5 1.300 5 1.900 5.400 1.900 6.300V7.700C1.900 8.900 1.900 9.500 3.400 9.500" stroke="#cdcdcd" stroke-width="1.600" fill="none"/><path d="M4.200 5l4-3.600v2.400h3.800v2.400h-3.800v2.400z" fill="#cdcdcd"/></svg>
<svg style="left:896px;top:455.3px;" width="10" height="8" viewBox="0 0 10 8"><path d="M0 4l6-4v8z" fill="#cdcdcd"/><rect x="7.5" width="2" height="8" fill="#cdcdcd"/></svg>
<svg style="left:921.5px;top:454.3px;" width="10" height="10" viewBox="0 0 10 10"><path d="M0 0l10 5-10 5z" fill="#cdcdcd"/></svg>
<svg style="left:948px;top:455.3px;" width="10" height="8" viewBox="0 0 10 8"><path d="M10 4l-6-4v8z" fill="#cdcdcd"/><rect x="0.5" width="2" height="8" fill="#cdcdcd"/></svg>
<svg style="left:973px;top:454.3px;" width="12" height="10" viewBox="0 0 12 10"><g transform="translate(8 0)"><path d="M0.600 0.500C2.100 0.500 2.100 1.100 2.100 2.300V3.700C2.100 4.600 2.700 5 3.600 5 2.700 5 2.100 5.400 2.100 6.300V7.700C2.100 8.900 2.100 9.500 0.600 9.500" stroke="#cdcdcd" stroke-width="1.600" fill="none"/></g><path d="M7.800 5l-4-3.600v2.400h-3.800v2.400h3.800v2.400z" fill="#cdcdcd"/></svg>
<svg style="left:1003px;top:453.8px;" width="14" height="11" viewBox="0 0 14 11"><rect x="3" y="0.600" width="8" height="6" fill="#cdcdcd"/><path d="M5 3.600h4M7 1.800v3.600" stroke="#232323" stroke-width="1"/><rect x="0" y="5.500" width="6" height="5.500" fill="#cdcdcd"/><rect x="8" y="5.500" width="6" height="5.500" fill="#cdcdcd"/><rect x="6" y="8" width="2" height="3" fill="#cdcdcd"/></svg>
<svg style="left:1029px;top:453.8px;" width="14" height="11" viewBox="0 0 14 11"><rect x="3" y="0.600" width="8" height="6" fill="#cdcdcd"/><path d="M5 3.600h4M7 1.800v3.600" stroke="#232323" stroke-width="1"/><rect x="0" y="5.500" width="6" height="5.500" fill="#cdcdcd"/><rect x="8" y="5.500" width="6" height="5.500" fill="#cdcdcd"/><rect x="1.500" y="7.500" width="2.500" height="2" fill="#232323"/><rect x="10" y="7.500" width="2.500" height="2" fill="#232323"/></svg>
<svg style="left:1056px;top:454.8px;" width="12" height="10" viewBox="0 0 12 10"><path d="M0 2h3l1-2h4l1 2h3v8H0z" fill="#cdcdcd"/><circle cx="6" cy="5.6" r="2" fill="none" stroke="#232323" stroke-width="1.2"/></svg>
<svg style="left:1081.5px;top:453.8px;" width="13" height="11" viewBox="0 0 13 11"><rect width="8" height="7" fill="#cdcdcd"/><rect x="5" y="4" width="8" height="7" fill="#cdcdcd" stroke="#232323" stroke-width="1"/><rect x="7.500" y="6.500" width="3" height="2.500" fill="#232323"/></svg>
<svg style="left:1394.5px;top:456.2px;" width="9" height="9" viewBox="0 0 9 9"><path d="M4.500 0v9M0 4.500h9" stroke="#e6e6e6" stroke-width="2.700"/></svg>
<svg style="left:900px;top:360px;" width="40" height="95" viewBox="0 0 40 95"><path d="M14 9L19.500 76l-3.500 1 11.400 13 6.600-16.500-4.200 1.500z" fill="#f5271d"/></svg>
<!-- PROJECT PANEL -->
<div class="a" style="left:429px;top:478px;width:3px;height:306px;background:#181818;"></div>
<div class="a" id="t46" style="top:481.3px;font-size:9.6px;line-height:13px;height:13px;color:#909090;left:11px;font-weight:700;letter-spacing:0.026px;">素材箱: 音乐</div>
<div class="a" id="t47" style="top:481.3px;font-size:9.6px;line-height:13px;height:13px;color:#dcdcdc;left:96px;font-weight:700;letter-spacing:0.193px;">素材箱: 素材</div>
<svg style="left:157px;top:484.5px;" width="7" height="7" viewBox="0 0 7 7"><path d="M0 1h7M0 3.500h7M0 6h7" stroke="#cfcfcf" stroke-width="1.100"/></svg>
<div class="a" style="left:94px;top:495.5px;width:70px;height:2px;background:#d2d2d2;"></div>
<div class="a" id="t48" style="top:481.3px;font-size:9.6px;line-height:13px;height:13px;color:#909090;left:181px;font-weight:700;letter-spacing:-0.156px;">项目: 第12课1</div>
<div class="a" id="t49" style="top:481.3px;font-size:9.6px;line-height:13px;height:13px;color:#909090;left:271px;font-weight:700;letter-spacing:0.258px;">媒体浏览器</div>
<div class="a" id="t50" style="top:481.3px;font-size:9.6px;line-height:13px;height:13px;color:#909090;left:352px;font-weight:700;">库</div>
<div class="a" id="t51" style="top:481.3px;font-size:9.6px;line-height:13px;height:13px;color:#a3a3a3;left:392px;">(</div>
<svg style="left:416px;top:484.5px;" width="9" height="7" viewBox="0 0 9 7"><path d="M0.700 0.500l3 3-3 3M5 0.500l3 3-3 3" stroke="#d4d4d4" stroke-width="1.900" fill="none"/></svg>
<svg style="left:10px;top:506px;" width="13" height="10" viewBox="0 0 13 10"><path d="M0 1.500h4.500l1 1.500H13v7H0z" fill="#cfcfcf"/><path d="M3.500 5v3h4.500" stroke="#232323" stroke-width="1" fill="none"/><path d="M2 6.200l1.500-1.800 1.500 1.800z" fill="#232323"/></svg>
<div class="a" id="t52" style="top:503.5px;font-size:9.4px;line-height:13px;height:13px;color:#9c9c9c;left:33px;letter-spacing:-0.095px;">第12课1.prproj\素材</div>
<div class="a" style="left:11px;top:523px;width:147px;height:14px;background:#171717;border-radius:2px"></div>
<svg style="left:14px;top:525.5px;" width="10" height="10" viewBox="0 0 10 10"><circle cx="6.200" cy="3.800" r="2.700" fill="none" stroke="#d0d0d0" stroke-width="1.500"/><path d="M4.200 5.800L0.800 9.200" stroke="#d0d0d0" stroke-width="1.800"/></svg>
<svg style="left:171px;top:525px;" width="12" height="10" viewBox="0 0 12 10"><path d="M0 1h4l1 1.500H12V10H0z" fill="#cfcfcf"/><circle cx="7" cy="5.800" r="1.600" fill="none" stroke="#232323" stroke-width="0.900"/><path d="M5.800 7l-1.600 1.600" stroke="#232323" stroke-width="1"/></svg>
<div class="a" id="t53" style="top:523.5px;font-size:9.4px;line-height:13px;height:13px;color:#9c9c9c;left:330px;letter-spacing:0.330px;">1 项已选择，共 4 项</div>
<div class="a" style="left:11px;top:547px;width:404px;height:203px;background:#222222;border:1px solid #1d1d1d"></div>
<div class="a" style="left:415px;top:547px;width:8px;height:203px;background:#262626;"></div>
<div class="a" style="left:17px;top:552px;width:122px;height:70px;background:#0a0a0a;"></div>
<svg style="left:18px;top:553px;overflow:hidden" width="120" height="68" viewBox="0 0 120 68"><defs><linearGradient id="sk2" x1="0" y1="0" x2="0" y2="1"><stop offset="0" stop-color="#b9dafb"/><stop offset="0.600" stop-color="#cfe4fa"/><stop offset="1" stop-color="#e4edf8"/></linearGradient><linearGradient id="lk2" x1="0" y1="0" x2="0" y2="1"><stop offset="0" stop-color="#d6dad6"/><stop offset="0.500" stop-color="#cdd1c4"/><stop offset="1" stop-color="#c2c5ab"/></linearGradient><filter id="bl2" x="-5%" y="-20%" width="110%" height="140%"><feGaussianBlur stdDeviation="0.500"/></filter></defs><rect width="120" height="34" fill="url(#sk2)"/><g filter="url(#bl2)"><rect x="0" y="27.500" width="9" height="5" fill="#a3a9ae"/><rect x="10" y="27" width="7" height="5" fill="#aab0b5"/><rect x="18" y="26.500" width="10" height="5" fill="#a0a5ab"/><rect x="29" y="26" width="12" height="5.500" fill="#9b9fa6"/><rect x="42" y="28" width="5" height="4" fill="#b3b1b0"/><rect x="47" y="27" width="6" height="4" fill="#c9c7c4"/><rect x="54" y="29.500" width="50" height="3" fill="#d3d8de"/><rect x="104" y="28.500" width="5" height="5.500" fill="#e8ebee"/><rect x="109" y="27" width="6" height="3" fill="#9aa3b0"/><path d="M0 30.500l10-0.300 20 0.500 25 0.300 10 1 39-0.200v2.500H0z" fill="#5e7260"/><path d="M0 32.500h104v1.600H0z" fill="#55695a"/><path d="M108 30l4-2 5-1.500h3v9l-14-1.500z" fill="#71904a"/></g><rect y="34" width="120" height="34" fill="url(#lk2)"/><path d="M102 34l18 1.800v1.200l-18-2.200z" fill="#a3ad5e"/><rect x="100.500" y="33.500" width="4" height="1" fill="#f0f2f2"/><rect x="62.500" y="36.300" width="3" height="1" fill="#b4675c"/><rect x="108.500" y="57" width="11.500" height="11" fill="#2a7ad0"/><rect x="110.500" y="61" width="7.500" height="3" fill="#7db4ee" opacity=".7"/></svg>
<div class="a" id="t54" style="top:626.0px;font-size:9.4px;line-height:13px;height:13px;color:#cfcfcf;left:18.5px;font-weight:500;letter-spacing:0.094px;">变速素材.mp4</div>
<div class="a" id="t55" style="top:626.7px;font-size:8.4px;line-height:12px;height:12px;color:#cfcfcf;left:111px;font-weight:500;letter-spacing:-0.242px;">1:07:13</div>
<div class="a" style="left:151.5px;top:552px;width:123px;height:70px;background:#0a0a0a;"></div>
<svg style="left:152.5px;top:553px;" width="121" height="68" viewBox="0 0 121 68"><defs><linearGradient id="wl" x1="0" y1="0" x2="1" y2="0"><stop offset="0" stop-color="#959ea5"/><stop offset="0.500" stop-color="#a3abb0"/><stop offset="1" stop-color="#a0a8ad"/></linearGradient><linearGradient id="gr" x1="0" y1="0" x2="0" y2="1"><stop offset="0" stop-color="#848e9a"/><stop offset="1" stop-color="#707a88"/></linearGradient></defs><rect width="121" height="68" fill="url(#wl)"/><rect y="46" width="121" height="22" fill="url(#gr)"/><rect y="45.500" width="121" height="2.500" fill="#8f99a3"/><rect y="55" width="121" height="1" fill="#8a94a0" opacity=".7"/><path d="M39.500 17.500l2-0.500 8.500 11.500-3 2z" fill="#c98f7c"/><path d="M35 33l12-5 8 3.500 1.500 7-2.500 1.500-4-6-9 2.500 0.500 8-6 13.500-4-1 4-13z" fill="#3d4350"/><circle cx="60" cy="34" r="3.200" fill="#202026"/><path d="M56 34.500l3.500 0.500 0.500 3.500-3 0z" fill="#b58b80"/><path d="M53.500 39l2-1 5.500 16-1.500 0.500z" fill="#b58b80"/><path d="M26.500 56.500l4-1.500 4.500 3-1 2.500-7.500-1z" fill="#f3f3f3"/><path d="M34 60l4-1.500 5.500 2.500-0.500 2.500-9-0.500z" fill="#f6f6f6"/><path d="M89 57.500l6 0.500 8 5 16 1v2.500l-20-1.500-9-4.500z" fill="#b4bdca" opacity=".85"/></svg>
<div class="a" id="t56" style="top:626.5px;font-size:8.6px;line-height:12px;height:12px;color:#bdbdbd;left:153.5px;font-weight:500;letter-spacing:-0.348px;">2.mp4</div>
<div class="a" id="t57" style="top:626.7px;font-size:8.4px;line-height:12px;height:12px;color:#bdbdbd;left:256.7px;font-weight:500;letter-spacing:-0.271px;">6:05</div>
<div class="a" style="left:328px;top:552px;width:41px;height:70px;background:#0a0a0a;"></div>
<svg style="left:329px;top:553px;" width="39" height="68" viewBox="0 0 39 68"><defs><linearGradient id="p3" x1="0" y1="0" x2="0" y2="1"><stop offset="0" stop-color="#d9dee8"/><stop offset="1" stop-color="#cfd3da"/></linearGradient></defs><rect width="39" height="68" fill="url(#p3)"/><rect y="35" width="39" height="33" fill="#7f796c"/><path d="M0 36l6-2 8 1 3 6 0 10-17 2z" fill="#26272b"/><path d="M0 46h14l-2 8-12 2z" fill="#9b958a"/><path d="M24 38l15-2v24l-15 2z" fill="#2b2c31"/><path d="M0 58l12-3 4 13h-16z" fill="#6d675a"/><path d="M8 31l5-3 2 3-2 12-4 2-2-6z" fill="#c79aa6"/><path d="M26 30l5 3 5 8 2 9-5 3-5-9z" fill="#c48a9c"/><ellipse cx="22.500" cy="20.500" rx="3.200" ry="3.800" fill="#c99a80"/><path d="M18.500 19.500a4.300 3.900 0 0 1 8.400-0.500l-1 1.200-6.800 0.300z" fill="#f3e4e4"/><path d="M16 26l5-2h4l4 3 1 8-2 5 1 8-2 10-1 10h-3.500l-0.500-14-1.500-3-1.500 6-1 11h-3.500l-0.500-12-1-10 1-8-1-5z" fill="#d8a684"/><path d="M16.500 30h10.500l-0.500 4.500h-9.500z" fill="#e4bfa6"/><path d="M15.500 41.500h12l-1 5-5 3-5-3z" fill="#ead3c8"/><rect x="27" y="57.500" width="11" height="9.500" fill="#2b2b2b" stroke="#e6e6e6" stroke-width="0.800"/><path d="M29 60v4.500M31 61v2.500M33 60v4.500M35 61v2.500M36.500 61.500v1.500" stroke="#fff" stroke-width="1.100"/></svg>
<div class="a" id="t58" style="top:626.5px;font-size:8.6px;line-height:12px;height:12px;color:#bdbdbd;left:288.5px;font-weight:500;letter-spacing:-0.348px;">3.mp4</div>
<div class="a" id="t59" style="top:626.7px;font-size:8.4px;line-height:12px;height:12px;color:#bdbdbd;left:392.5px;font-weight:500;letter-spacing:-0.104px;">9:22</div>
<div class="a" style="left:11px;top:645.7px;width:134px;height:98.3px;background:#868686;box-shadow:0 1px 2px #111"></div>
<svg style="left:59.2px;top:652.4px;" width="37.5" height="68" viewBox="0 0 37.5 68"><rect width="37.500" height="68" fill="#b9b9b9"/><rect width="37.500" height="38" fill="#d6e3e9"/><rect x="2" width="3" height="38" fill="#9ccbd3"/><rect x="7" width="4.500" height="38" fill="#4fb0b8"/><rect x="13" width="2" height="30" fill="#8bbfd0"/><rect x="22" width="3" height="20" fill="#86bccb"/><rect x="27" width="10.500" height="38" fill="#e6dfd0"/><rect x="0" y="30" width="8" height="8" fill="#d8dde2"/><rect y="38" width="37.500" height="1.500" fill="#8e938f"/><ellipse cx="18.500" cy="9.500" rx="2.600" ry="3" fill="#caa58b"/><path d="M15.500 8a3.200 2.600 0 0 1 6.200 0z" fill="#e6e2dc"/><path d="M12.500 16l4-3 6 0 4 4 1 8-2 8 1 6-1 14-1 10-3 0 0-8-2-8-1 8-1 6-3 0 0-10 0-12-1-10z" fill="#141414"/><path d="M22 24l5 4 1 8-4 2-2-8z" fill="#5a4a3c"/><path d="M24 14l3 6 0 8-3-4z" fill="#7a3036"/><rect x="25.500" y="57.500" width="11" height="9.500" fill="#222" stroke="#eee" stroke-width="0.800"/><path d="M27.500 60v4.500M29.500 61v2.500M31.500 60v4.500M33.500 61v2.500M35 61.500v1.500" stroke="#fff" stroke-width="1.100"/></svg>
<div class="a" id="t60" style="top:726.3px;font-size:8.6px;line-height:12px;height:12px;color:#3d3d3d;left:18.7px;letter-spacing:-0.473px;">1.mp4</div>
<div class="a" id="t61" style="top:726.5px;font-size:8.4px;line-height:12px;height:12px;color:#3d3d3d;left:117px;letter-spacing:-0.117px;">18:19</div>
<svg style="left:10.5px;top:764.5px;" width="11" height="11" viewBox="0 0 11 11"><path d="M0.500 10.500l1.200-4L8 0.300l2.700 2.700-6.200 6.300z" fill="#1f9c3a"/><path d="M0.500 10.500l1.200-4 2.800 2.800z" fill="#0f6a25"/></svg>
<svg style="left:32px;top:765px;" width="13" height="11" viewBox="0 0 13 11"><rect width="4" height="4" fill="#d0d0d0"/><rect y="6.500" width="4" height="4" fill="#d0d0d0"/><rect x="5.500" y="1" width="7.500" height="2" fill="#d0d0d0"/><rect x="5.500" y="7.500" width="7.500" height="2" fill="#d0d0d0"/></svg>
<svg style="left:56.5px;top:765px;" width="9" height="11" viewBox="0 0 9 11"><rect width="9" height="7.500" fill="#2d8ceb"/><rect y="9" width="9" height="1.600" fill="#2d8ceb"/></svg>
<svg style="left:75.5px;top:765px;" width="15" height="11" viewBox="0 0 15 11"><rect x="0.500" y="0.500" width="8" height="5.500" fill="#232323" stroke="#d0d0d0" stroke-width="1"/><rect x="3.500" y="2.500" width="8" height="5.500" fill="#232323" stroke="#d0d0d0" stroke-width="1"/><rect x="6.500" y="4.500" width="8" height="6" fill="#d0d0d0"/></svg>
<div class="a" style="left:108px;top:770px;width:42px;height:1.4px;background:#4a4a4a;"></div>
<svg style="left:99.5px;top:766.5px;" width="8" height="8" viewBox="0 0 8 8"><circle cx="4" cy="4" r="2.800" fill="#232323" stroke="#d0d0d0" stroke-width="1.500"/></svg>
<svg style="left:163px;top:765.5px;" width="12" height="10" viewBox="0 0 12 10"><path d="M0 1h12M0 4h12M0 7h9M0 10h6" stroke="#d0d0d0" stroke-width="1.600"/></svg>
<svg style="left:183px;top:768.5px;" width="7" height="4" viewBox="0 0 7 4"><path d="M0.500 0.500l3 3 3-3" stroke="#b0b0b0" stroke-width="1.200" fill="none"/></svg>
<svg style="left:306.5px;top:766px;" width="13" height="9" viewBox="0 0 13 9"><path d="M0 1.500l3-1.500h2v9H0zM6 0h4l3 1.500V9H6z" fill="#cfcfcf"/><path d="M8.800 0v9" stroke="#232323" stroke-width="0.800"/></svg>
<svg style="left:329px;top:765px;" width="11" height="11" viewBox="0 0 11 11"><circle cx="6.800" cy="4" r="3" fill="none" stroke="#d0d0d0" stroke-width="1.500"/><path d="M4.500 6.300L0.800 10" stroke="#d0d0d0" stroke-width="1.900"/></svg>
<svg style="left:352px;top:765.5px;" width="11" height="9" viewBox="0 0 11 9"><path d="M0 0h4l1 1.500h6V9H0z" fill="#cfcfcf"/></svg>
<svg style="left:375.5px;top:765.5px;" width="9" height="9" viewBox="0 0 9 9"><path d="M0 0h9v9H5.500L0 4z" fill="#cfcfcf"/><path d="M0 4h5.500v5" fill="#232323" opacity=".55"/></svg>
<svg style="left:397px;top:764.5px;" width="9" height="11" viewBox="0 0 9 11"><path d="M3 0h3v1h3v1.500H0V1h3zM0.800 3.500h7.400l-.6 7.500H1.400z" fill="#cfcfcf"/><path d="M3 5v4.500M4.500 5v4.500M6 5v4.500" stroke="#232323" stroke-width="0.700"/></svg>
<!-- STATUS BAR -->
<div class="a" style="left:0px;top:783px;width:1424px;height:2px;background:#181818;"></div>
<div class="a" style="left:0px;top:785px;width:1424px;height:16px;background:#262626;"></div>
<div class="a" style="left:1404px;top:785px;width:1px;height:16px;background:#1c1c1c;"></div>
<div class="a" style="left:1405px;top:785px;width:19px;height:16px;background:#2a2a2a;"></div>
<svg style="left:2px;top:788px;" width="12" height="9" viewBox="0 0 12 9"><ellipse cx="6" cy="4.500" rx="5.500" ry="4" fill="none" stroke="#bdbdbd" stroke-width="1.300"/><circle cx="4.300" cy="4.600" r="1.600" fill="none" stroke="#bdbdbd" stroke-width="1"/><circle cx="7.800" cy="4.600" r="1.600" fill="none" stroke="#bdbdbd" stroke-width="1"/></svg>
<div class="a" id="t62" style="top:786.5px;font-size:9.4px;line-height:13px;height:13px;color:#b4b4b4;left:42.3px;font-weight:500;letter-spacing:0.395px;">单击以选择，或单击空白处并拖动以进行框选。使用 <span style="font-size:8.300px;letter-spacing:0">Shift</span>、<span style="font-size:8.300px;letter-spacing:0">Alt</span> 和 <span style="font-size:8.300px;letter-spacing:0">Ctrl</span> 可获得其他选项。</div>
<!-- TOOLS -->
<div class="a" style="left:465px;top:478px;width:2px;height:306px;background:#181818;"></div>
<div class="a" style="left:435.5px;top:491.5px;width:19.5px;height:16px;background:#151515;border-radius:1px"></div>
<svg style="left:441px;top:493px;" width="11" height="13" viewBox="0 0 11 13"><path d="M0.500 0l10 7-5.500 1.200L1.500 12.500z" fill="#2d8ceb"/></svg>
<svg style="left:439.5px;top:514px;" width="14" height="11" viewBox="0 0 14 11"><rect x="0.600" y="1.600" width="7.500" height="7.500" fill="none" stroke="#d2d2d2" stroke-width="1.200" stroke-dasharray="2 1.300"/><path d="M6 3.800h3.500V1.500l4 3.800-4 3.800V6.800H6z" fill="#d2d2d2"/></svg>
<svg style="left:439px;top:533.5px;" width="14" height="11" viewBox="0 0 14 11"><path d="M7 0v11" stroke="#d2d2d2" stroke-width="1.500"/><path d="M0 5.500l4-3.300v2.300h6V2.200l4 3.300-4 3.300V6.500H4v2.300z" fill="#d2d2d2"/></svg>
<svg style="left:440px;top:552.5px;" width="12" height="12" viewBox="0 0 12 12"><path d="M4 0.500L11.500 8 8 11.500 0.500 4z" fill="#d2d2d2"/><path d="M4.500 4.500l3 3" stroke="#232323" stroke-width="1.200"/></svg>
<svg style="left:438.5px;top:573px;" width="15" height="12" viewBox="0 0 15 12"><path d="M0.800 0v12M14.200 0v12" stroke="#d2d2d2" stroke-width="1.500"/><path d="M2.500 6l3-2.800v2h4v-2l3 2.800-3 2.800v-2h-4v2z" fill="#d2d2d2"/></svg>
<svg style="left:440px;top:592.5px;" width="12" height="13" viewBox="0 0 12 13"><path d="M7.500 0l4 4-2 1.500-3.500-3.500zM5.300 2.800l3.800 3.800-2.300 4.200-6 1.700 1.800-6.200z" fill="#d2d2d2"/><circle cx="5" cy="8" r="1" fill="#232323"/></svg>
<svg style="left:440px;top:612.5px;" width="12" height="13" viewBox="0 0 12 13"><path d="M2.500 13c-1-2-2.500-3.500-2.500-5.500 0-1 1.200-1 1.800 0V2.500c0-1.200 1.700-1.200 1.700 0V1.200c0-1.300 1.800-1.300 1.800 0v1c0-1.200 1.800-1.200 1.800 0v1.300c0-1.100 1.700-1.100 1.700 0V9c0 2-0.800 3-1.300 4z" fill="#d2d2d2"/></svg>
<div class="a" id="t63" style="top:627.6px;font-size:15.5px;line-height:22px;height:22px;color:#d2d2d2;left:440.3px;font-weight:700;font-family:'Liberation Serif',serif;">T</div>
<svg style="left:453.5px;top:525.5px;" width="3" height="3" viewBox="0 0 3 3"><path d="M3 0v3H0z" fill="#8a8a8a"/></svg>
<svg style="left:453.5px;top:545px;" width="3" height="3" viewBox="0 0 3 3"><path d="M3 0v3H0z" fill="#8a8a8a"/></svg>
<svg style="left:453.5px;top:606px;" width="3" height="3" viewBox="0 0 3 3"><path d="M3 0v3H0z" fill="#8a8a8a"/></svg>
<svg style="left:453.5px;top:625.5px;" width="3" height="3" viewBox="0 0 3 3"><path d="M3 0v3H0z" fill="#8a8a8a"/></svg>
<svg style="left:453.5px;top:646px;" width="3" height="3" viewBox="0 0 3 3"><path d="M3 0v3H0z" fill="#8a8a8a"/></svg>
<!-- TIMELINE -->
<div class="a" style="left:466.2px;top:477.2px;width:875px;height:306.8px;background:#212121;border:1.700px solid #5a76ad"></div>
<div class="a" style="left:469px;top:479px;width:173px;height:290px;background:#242424;"></div>
<div class="a" id="t64" style="top:481.1px;font-size:9.6px;line-height:13px;height:13px;color:#909090;left:487.5px;font-weight:700;letter-spacing:0.307px;">时间重映射讲解</div>
<svg style="left:587px;top:485px;" width="5" height="5" viewBox="0 0 5 5"><path d="M0.500 0.500l4 4M4.500 0.500l-4 4" stroke="#8a8a8a" stroke-width="1"/></svg>
<div class="a" id="t65" style="top:481.1px;font-size:9.6px;line-height:13px;height:13px;color:#dcdcdc;left:599.5px;font-weight:700;letter-spacing:0.312px;">变速</div>
<svg style="left:626.5px;top:484.5px;" width="7" height="7" viewBox="0 0 7 7"><path d="M0 1h7M0 3.500h7M0 6h7" stroke="#cfcfcf" stroke-width="1.100"/></svg>
<div class="a" style="left:586.5px;top:495.2px;width:46.5px;height:2px;background:#d2d2d2;"></div>
<div class="a" id="t66" style="top:499.7px;font-size:12.2px;line-height:17px;height:17px;color:#2d86e6;left:479.8px;font-weight:700;letter-spacing:-0.241px;">00:00:00:13</div>
<svg style="left:483px;top:519.5px;" width="11" height="11" viewBox="0 0 11 11"><path d="M5.500 0v11M0.700 2.800l9.600 5.400M0.700 8.200l9.600-5.400" stroke="#2d86e6" stroke-width="1.400"/><circle cx="5.500" cy="5.500" r="1.600" fill="#242424" stroke="#2d86e6" stroke-width="1"/></svg>
<svg style="left:508px;top:520px;" width="10" height="10" viewBox="0 0 10 10"><path d="M1.200 10V5a3.800 3.800 0 0 1 7.600 0v5" fill="none" stroke="#2d86e6" stroke-width="2.300"/></svg>
<svg style="left:533px;top:519.5px;" width="12" height="11" viewBox="0 0 12 11"><path d="M3.500 0.500l8 5.300-4.500 1L4.800 10.500z" fill="#2d86e6"/><rect x="0" y="1" width="4" height="3" fill="#2d86e6"/><rect x="0" y="5.500" width="3" height="3" fill="#2d86e6"/></svg>
<svg style="left:560px;top:520.5px;" width="8" height="9" viewBox="0 0 8 9"><path d="M0 0h8v5.500l-4 3.500-4-3.500z" fill="#cdcdcd"/></svg>
<svg style="left:583px;top:519px;" width="12" height="12" viewBox="0 0 12 12"><path d="M2.2 0.3a3.2 3.2 0 0 0-1.9 4.2 3.2 3.2 0 0 0 3.5 1.9l5.3 5.3a1 1 0 0 0 1.6-1.5L5.4 4.9a3.2 3.2 0 0 0-.6-3.3A3.2 3.2 0 0 0 3.6.2l.9 2.3-1.7 1-1.6-.9z" fill="#cfcfcf"/></svg>
<div class="a" id="t67" style="top:509.3px;font-size:8.6px;line-height:12px;height:12px;color:#b8b8b8;left:643.5px;font-weight:500;letter-spacing:-0.381px;">:00:00</div>
<div class="a" id="t68" style="top:509.3px;font-size:8.6px;line-height:12px;height:12px;color:#b8b8b8;left:862.5px;font-weight:500;letter-spacing:-0.291px;">00:00:01:00</div>
<div class="a" id="t69" style="top:509.3px;font-size:8.6px;line-height:12px;height:12px;color:#b8b8b8;left:1103px;font-weight:500;letter-spacing:-0.291px;">00:00:02:00</div>
<svg style="left:642px;top:524px;" width="680" height="7" viewBox="0 0 680 7"><rect x="0.5" y="3" width="1" height="4" fill="#4a4a4a"/><rect x="48.6" y="3" width="1" height="4" fill="#4a4a4a"/><rect x="96.7" y="3" width="1" height="4" fill="#4a4a4a"/><rect x="144.8" y="3" width="1" height="4" fill="#4a4a4a"/><rect x="192.9" y="3" width="1" height="4" fill="#4a4a4a"/><rect x="241.0" y="0" width="1" height="7" fill="#6a6a6a"/><rect x="289.1" y="3" width="1" height="4" fill="#4a4a4a"/><rect x="337.2" y="3" width="1" height="4" fill="#4a4a4a"/><rect x="385.3" y="3" width="1" height="4" fill="#4a4a4a"/><rect x="433.4" y="3" width="1" height="4" fill="#4a4a4a"/><rect x="481.5" y="0" width="1" height="7" fill="#6a6a6a"/><rect x="529.6" y="3" width="1" height="4" fill="#4a4a4a"/><rect x="577.7" y="3" width="1" height="4" fill="#4a4a4a"/><rect x="625.8" y="3" width="1" height="4" fill="#4a4a4a"/><rect x="673.9" y="3" width="1" height="4" fill="#4a4a4a"/></svg>
<div class="a" style="left:826px;top:499px;width:1px;height:31px;background:#8c8c8c;"></div>
<div class="a" style="left:468px;top:554px;width:858px;height:1px;background:#383838;"></div>
<div class="a" style="left:468px;top:573px;width:858px;height:1px;background:#1c1c1c;"></div>
<div class="a" style="left:468px;top:628.5px;width:858px;height:1px;background:#1c1c1c;"></div>
<div class="a" style="left:468px;top:648.5px;width:858px;height:1px;background:#1c1c1c;"></div>
<div class="a" style="left:468px;top:721px;width:858px;height:1px;background:#1c1c1c;"></div>
<div class="a" style="left:468px;top:739px;width:858px;height:1px;background:#1c1c1c;"></div>
<div class="a" style="left:468px;top:757.5px;width:858px;height:1px;background:#1c1c1c;"></div>
<div class="a" style="left:641.5px;top:531px;width:1px;height:238px;background:#1c1c1c;"></div>
<svg style="left:503.7px;top:558.8000000000001px;" width="8" height="10" viewBox="0 0 8 10"><path d="M1.600 4.500V2.700a2.300 2.300 0 0 1 4.400-.9" fill="none" stroke="#d6d6d6" stroke-width="1.300"/><rect x="0" y="4.300" width="7.600" height="5.300" rx="0.800" fill="#d6d6d6"/><rect x="3.200" y="6" width="1.200" height="2" fill="#242424"/></svg>
<div class="a" id="t70" style="top:558.0px;font-size:8.4px;line-height:12px;height:12px;color:#8e8e8e;left:521px;font-weight:500;letter-spacing:-1.250px;">V3</div>
<svg style="left:543.5px;top:559.6px;" width="11" height="8" viewBox="0 0 11 8"><rect x="0.600" y="0.600" width="7.300" height="6.800" rx="1" fill="none" stroke="#d6d6d6" stroke-width="1.200"/><path d="M0.600 4h5" stroke="#d6d6d6" stroke-width="1.100"/><path d="M7.900 2.500l2.600-1.300v5.600l-2.600-1.300z" fill="#d6d6d6"/></svg>
<svg style="left:563.2px;top:560.3px;" width="11" height="7" viewBox="0 0 11 7"><path d="M0 3.500C2.500-0.600 8.500-0.600 11 3.500 8.500 7.600 2.500 7.600 0 3.500z" fill="#d6d6d6"/><circle cx="5.500" cy="3.500" r="2" fill="#242424"/><circle cx="5.500" cy="3.500" r="0.900" fill="#d6d6d6"/></svg>
<svg style="left:543.5px;top:577.6px;" width="11" height="8" viewBox="0 0 11 8"><rect x="0.600" y="0.600" width="7.300" height="6.800" rx="1" fill="none" stroke="#d6d6d6" stroke-width="1.200"/><path d="M0.600 4h5" stroke="#d6d6d6" stroke-width="1.100"/><path d="M7.900 2.500l2.600-1.300v5.600l-2.600-1.300z" fill="#d6d6d6"/></svg>
<svg style="left:563.2px;top:578.3px;" width="11" height="7" viewBox="0 0 11 7"><path d="M0 3.500C2.500-0.600 8.500-0.600 11 3.500 8.500 7.600 2.500 7.600 0 3.500z" fill="#2d7fe0"/><circle cx="5.500" cy="3.500" r="2" fill="#242424"/><circle cx="5.500" cy="3.500" r="0.900" fill="#2d7fe0"/></svg>
<svg style="left:563.5px;top:577px;" width="10" height="10" viewBox="0 0 10 10"><path d="M1 0.500l8.500 9" stroke="#2d7fe0" stroke-width="1.300"/></svg>
<svg style="left:503.7px;top:591.4000000000001px;" width="8" height="10" viewBox="0 0 8 10"><path d="M1.600 4.500V2.700a2.300 2.300 0 0 1 4.400-.9" fill="none" stroke="#d6d6d6" stroke-width="1.300"/><rect x="0" y="4.300" width="7.600" height="5.300" rx="0.800" fill="#d6d6d6"/><rect x="3.200" y="6" width="1.200" height="2" fill="#242424"/></svg>
<div class="a" id="t71" style="top:591.4px;font-size:8.4px;line-height:12px;height:12px;color:#8e8e8e;left:521px;font-weight:500;letter-spacing:-1.250px;">V2</div>
<div class="a" id="t72" style="top:593.7px;font-size:9.5px;line-height:13px;height:13px;color:#9c9c9c;left:541px;font-weight:500;letter-spacing:-0.146px;">视频 2</div>
<svg style="left:546px;top:616.5px;" width="5" height="7" viewBox="0 0 5 7"><path d="M5 0v7L0 3.500z" fill="#474747"/></svg>
<svg style="left:565px;top:616.5px;" width="7" height="7" viewBox="0 0 7 7"><path d="M3.500 0.500l3 3-3 3-3-3z" fill="none" stroke="#3e3e3e" stroke-width="1.100"/></svg>
<svg style="left:586px;top:616.5px;" width="5" height="7" viewBox="0 0 5 7"><path d="M0 0v7l5-3.500z" fill="#474747"/></svg>
<div class="a" style="left:475.7px;top:629px;width:24.5px;height:18.3px;background:#0c5ea6;"></div>
<div class="a" style="left:514.3px;top:629px;width:24.3px;height:18.3px;background:#0c5ea6;"></div>
<div class="a" id="t73" style="top:632.5px;font-size:8.4px;line-height:12px;height:12px;color:#a9cdf0;left:483.5px;font-weight:500;letter-spacing:-1.250px;">V1</div>
<div class="a" id="t74" style="top:632.5px;font-size:8.4px;line-height:12px;height:12px;color:#a9cdf0;left:522px;font-weight:500;letter-spacing:-1.250px;">V1</div>
<svg style="left:503.7px;top:633.0px;" width="8" height="10" viewBox="0 0 8 10"><path d="M1.600 4.500V2.700a2.300 2.300 0 0 1 4.400-.9" fill="none" stroke="#d6d6d6" stroke-width="1.300"/><rect x="0" y="4.300" width="7.600" height="5.300" rx="0.800" fill="#d6d6d6"/><rect x="3.200" y="6" width="1.200" height="2" fill="#242424"/></svg>
<svg style="left:543.5px;top:634px;" width="11" height="8" viewBox="0 0 11 8"><rect x="0.600" y="0.600" width="7.300" height="6.800" rx="1" fill="none" stroke="#d6d6d6" stroke-width="1.200"/><path d="M0.600 4h5" stroke="#d6d6d6" stroke-width="1.100"/><path d="M7.900 2.500l2.600-1.300v5.600l-2.600-1.300z" fill="#d6d6d6"/></svg>
<svg style="left:563.2px;top:634.7px;" width="11" height="7" viewBox="0 0 11 7"><path d="M0 3.500C2.500-0.600 8.500-0.600 11 3.500 8.500 7.600 2.500 7.600 0 3.500z" fill="#d6d6d6"/><circle cx="5.500" cy="3.500" r="2" fill="#242424"/><circle cx="5.500" cy="3.500" r="0.900" fill="#d6d6d6"/></svg>
<div class="a" style="left:475.7px;top:650.3px;width:24.5px;height:70px;background:#0c5ea6;"></div>
<div class="a" style="left:514.3px;top:650.3px;width:24.3px;height:107px;background:#0c5ea6;"></div>
<div class="a" style="left:514.3px;top:720.5px;width:24.3px;height:1px;background:#0a4f8c;"></div>
<div class="a" style="left:514.3px;top:738.5px;width:24.3px;height:1px;background:#0a4f8c;"></div>
<div class="a" id="t75" style="top:668.7px;font-size:8.4px;line-height:12px;height:12px;color:#a9cdf0;left:483px;font-weight:500;letter-spacing:-0.750px;">A1</div>
<div class="a" id="t76" style="top:668.7px;font-size:8.4px;line-height:12px;height:12px;color:#a9cdf0;left:521.5px;font-weight:500;letter-spacing:-0.750px;">A1</div>
<svg style="left:503.7px;top:669.2px;" width="8" height="10" viewBox="0 0 8 10"><path d="M1.600 4.500V2.700a2.300 2.300 0 0 1 4.400-.9" fill="none" stroke="#d6d6d6" stroke-width="1.300"/><rect x="0" y="4.300" width="7.600" height="5.300" rx="0.800" fill="#d6d6d6"/><rect x="3.200" y="6" width="1.200" height="2" fill="#242424"/></svg>
<svg style="left:543.5px;top:655.3px;" width="11" height="8" viewBox="0 0 11 8"><rect x="0.600" y="0.600" width="7.300" height="6.800" rx="1" fill="none" stroke="#d6d6d6" stroke-width="1.200"/><path d="M0.600 4h5" stroke="#d6d6d6" stroke-width="1.100"/><path d="M7.900 2.500l2.600-1.300v5.600l-2.600-1.300z" fill="#d6d6d6"/></svg>
<div class="a" id="t77" style="top:653.6px;font-size:8.6px;line-height:12px;height:12px;color:#d6d6d6;left:565px;font-weight:500;">M</div>
<div class="a" id="t78" style="top:653.6px;font-size:8.6px;line-height:12px;height:12px;color:#d6d6d6;left:586px;font-weight:500;">S</div>
<svg style="left:605.0px;top:653.8px;" width="7" height="11" viewBox="0 0 7 11"><rect x="1.700" y="0" width="3.600" height="6.500" rx="1.800" fill="#d6d6d6"/><path d="M0.500 4.500a3 3 0 0 0 6 0M3.500 7.800v2.200M1.500 10.300h4" stroke="#d6d6d6" stroke-width="1" fill="none"/></svg>
<div class="a" id="t79" style="top:671.1px;font-size:9.5px;line-height:13px;height:13px;color:#9c9c9c;left:541.3px;font-weight:500;letter-spacing:-0.312px;">音频 1</div>
<svg style="left:544px;top:692px;" width="10" height="10" viewBox="0 0 10 10"><circle cx="3.800" cy="4.500" r="3" fill="none" stroke="#d6d6d6" stroke-width="1.300"/><rect x="8" y="7.500" width="1.500" height="1.500" fill="#d6d6d6"/></svg>
<svg style="left:567px;top:693.3px;" width="5" height="7" viewBox="0 0 5 7"><path d="M5 0v7L0 3.500z" fill="#474747"/></svg>
<svg style="left:585px;top:693px;" width="7.6" height="7.6" viewBox="0 0 7.6 7.6"><path d="M3.800 0.600l3.200 3.200-3.200 3.200-3.200-3.200z" fill="none" stroke="#d6d6d6" stroke-width="1.200"/></svg>
<svg style="left:606px;top:693.3px;" width="5" height="7" viewBox="0 0 5 7"><path d="M0 0v7l5-3.500z" fill="#474747"/></svg>
<svg style="left:503.7px;top:725.2px;" width="8" height="10" viewBox="0 0 8 10"><path d="M1.600 4.500V2.700a2.300 2.300 0 0 1 4.400-.9" fill="none" stroke="#d6d6d6" stroke-width="1.300"/><rect x="0" y="4.300" width="7.600" height="5.300" rx="0.800" fill="#d6d6d6"/><rect x="3.200" y="6" width="1.200" height="2" fill="#242424"/></svg>
<div class="a" id="t80" style="top:724.5px;font-size:8.4px;line-height:12px;height:12px;color:#a9cdf0;left:521.5px;font-weight:500;letter-spacing:-0.750px;">A2</div>
<svg style="left:543.5px;top:726.2px;" width="11" height="8" viewBox="0 0 11 8"><rect x="0.600" y="0.600" width="7.300" height="6.800" rx="1" fill="none" stroke="#d6d6d6" stroke-width="1.200"/><path d="M0.600 4h5" stroke="#d6d6d6" stroke-width="1.100"/><path d="M7.900 2.500l2.600-1.300v5.600l-2.600-1.300z" fill="#d6d6d6"/></svg>
<div class="a" id="t81" style="top:724.5px;font-size:8.6px;line-height:12px;height:12px;color:#d6d6d6;left:565px;font-weight:500;">M</div>
<div class="a" id="t82" style="top:724.5px;font-size:8.6px;line-height:12px;height:12px;color:#d6d6d6;left:586px;font-weight:500;">S</div>
<svg style="left:605.0px;top:724.7px;" width="7" height="11" viewBox="0 0 7 11"><rect x="1.700" y="0" width="3.600" height="6.500" rx="1.800" fill="#d6d6d6"/><path d="M0.500 4.500a3 3 0 0 0 6 0M3.500 7.800v2.200M1.500 10.300h4" stroke="#d6d6d6" stroke-width="1" fill="none"/></svg>
<svg style="left:503.7px;top:743.5px;" width="8" height="10" viewBox="0 0 8 10"><path d="M1.600 4.500V2.700a2.300 2.300 0 0 1 4.400-.9" fill="none" stroke="#d6d6d6" stroke-width="1.300"/><rect x="0" y="4.300" width="7.600" height="5.300" rx="0.800" fill="#d6d6d6"/><rect x="3.200" y="6" width="1.200" height="2" fill="#242424"/></svg>
<div class="a" id="t83" style="top:742.8px;font-size:8.4px;line-height:12px;height:12px;color:#a9cdf0;left:521.5px;font-weight:500;letter-spacing:-0.750px;">A3</div>
<svg style="left:543.5px;top:744.5px;" width="11" height="8" viewBox="0 0 11 8"><rect x="0.600" y="0.600" width="7.300" height="6.800" rx="1" fill="none" stroke="#d6d6d6" stroke-width="1.200"/><path d="M0.600 4h5" stroke="#d6d6d6" stroke-width="1.100"/><path d="M7.900 2.500l2.600-1.300v5.600l-2.600-1.300z" fill="#d6d6d6"/></svg>
<div class="a" id="t84" style="top:742.8px;font-size:8.6px;line-height:12px;height:12px;color:#d6d6d6;left:565px;font-weight:500;">M</div>
<div class="a" id="t85" style="top:742.8px;font-size:8.6px;line-height:12px;height:12px;color:#d6d6d6;left:586px;font-weight:500;">S</div>
<svg style="left:605.0px;top:743.0px;" width="7" height="11" viewBox="0 0 7 11"><rect x="1.700" y="0" width="3.600" height="6.500" rx="1.800" fill="#d6d6d6"/><path d="M0.500 4.500a3 3 0 0 0 6 0M3.500 7.800v2.200M1.500 10.300h4" stroke="#d6d6d6" stroke-width="1" fill="none"/></svg>
<div class="a" style="left:469px;top:758.5px;width:172px;height:8.5px;overflow:hidden">
<div class="a" id="t86" style="top:0.5px;font-size:9.5px;line-height:13px;height:13px;color:#9c9c9c;left:48.5px;font-weight:500;letter-spacing:0.242px;">主声道</div>
<div class="a" id="t87" style="top:1.7px;font-size:9px;line-height:13px;height:13px;color:#2d86e6;left:104.5px;font-weight:500;">0.0</div>
<svg style="left:34.500px;top:1.500px" width="8" height="10" viewBox="0 0 8 10"><path d="M1.600 4.500V2.700a2.300 2.300 0 0 1 4.400-.9" fill="none" stroke="#d6d6d6" stroke-width="1.300"/><rect x="0" y="4.300" width="7.600" height="5.300" fill="#d6d6d6"/></svg>
</div>
<svg style="left:627px;top:759.5px;" width="10" height="8" viewBox="0 0 10 8"><path d="M0 0l4.300 4-4.300 4zM10 0l-4.300 4 4.300 4z" fill="#d6d6d6"/><rect x="4.600" width="0.800" height="8" fill="#d6d6d6"/></svg>
<div class="a" style="left:481px;top:767.5px;width:30px;height:7.5px;background:#383838;"></div>
<svg style="left:476.5px;top:766.8px;" width="9" height="9" viewBox="0 0 9 9"><circle cx="4.500" cy="4.500" r="3.200" fill="#242424" stroke="#b5b5b5" stroke-width="1.500"/></svg>
<svg style="left:506.5px;top:766.8px;" width="9" height="9" viewBox="0 0 9 9"><circle cx="4.500" cy="4.500" r="3.200" fill="#242424" stroke="#b5b5b5" stroke-width="1.500"/></svg>
<!-- CLIPS -->
<div class="a" style="left:642px;top:573px;width:681.3px;height:54.8px;background:#6f9bd1;"></div>
<div class="a" style="left:642px;top:627.8px;width:681.3px;height:1px;background:#0c0c0c;"></div>
<div class="a" style="left:642px;top:573px;width:681.3px;height:12.5px;background:#729ed5;"></div>
<div class="a" style="left:642px;top:585.3px;width:681.3px;height:1px;background:#b9d0ee;"></div>
<div class="a" style="left:642.5px;top:586.5px;width:34px;height:41.3px;background:#000;"></div>
<div class="a" style="left:707px;top:573.5px;width:33px;height:54.3px;background:#000;"></div>
<svg style="left:676px;top:573px;overflow:hidden" width="31" height="55" viewBox="0 0 31 55"><rect width="31" height="55" fill="#c9c9c7"/><rect width="31" height="31.500" fill="#d6e3e9"/><rect x="1" y="8" width="3" height="23" fill="#eef2f4"/><rect x="5.500" width="3" height="31" fill="#3fae9f"/><rect x="9" y="18" width="3" height="13" fill="#5bb5a8"/><rect x="2" y="20" width="2.500" height="9" fill="#3a8f84"/><rect x="20" width="11" height="31.500" fill="#e1dccd"/><rect x="12" width="8" height="7" fill="#bfe0dc"/><rect x="17" y="1" width="3" height="6" fill="#2f9e8a"/><rect y="31.500" width="31" height="1" fill="#a9aba6"/><ellipse cx="14.500" cy="9" rx="2.100" ry="2.500" fill="#b58f78"/><path d="M12.300 7.800a2.400 2.200 0 0 1 4.600 0z" fill="#e6e2dc"/><rect x="13.200" y="9.800" width="2.800" height="1.600" fill="#1c1c1c"/><path d="M10.500 14.500l3-1.500 4.500 0 2.500 2.500 1 6-1.500 4 0.500 6-1 8-0.500 6 2 4.500-1.500 1-2.500-4-0.500-5-1 5-1.500 3-1.500-0.500 1-4-0.500-8-1.500-8-0.500-7z" fill="#17171a"/><path d="M17.500 23l4 2.500 1 5-3 1.500-2.500-4z" fill="#4a3a30"/><path d="M13 20l5 4 1.500 3-1.500 1-5.500-4.500z" fill="#9a7868"/></svg>
<div class="a" style="left:642.5px;top:573px;width:43.5px;height:12.4px;background:#729ed5;"></div>
<div class="a" style="left:676px;top:585.3px;width:647.3px;height:1px;background:#c9d3dd;"></div>
<div class="a" id="t88" style="top:573.8px;font-size:7.6px;line-height:11px;height:11px;color:#2f5a9c;left:664px;font-weight:500;letter-spacing:-0.527px;">1.mp4</div>
<svg style="left:642px;top:573px;" width="5" height="5" viewBox="0 0 5 5"><path d="M0 0h4.500L0 4.500z" fill="#e8eef6"/></svg>
<svg style="left:650px;top:576px;" width="8" height="7.5" viewBox="0 0 8 7.5"><rect width="8" height="7.500" rx="0.800" fill="#5a6f8c"/><rect x="1.500" y="1.500" width="5" height="4.500" fill="none" stroke="#8fa5c4" stroke-width="0.900"/></svg>
<div class="a" style="left:642px;top:649.8px;width:681.3px;height:70.7px;background:#14785b;"></div>
<svg style="left:0px;top:0px;" width="1424" height="801" viewBox="0 0 1424 801"><path d="M642 684.6L642.0 678.8L642.8 678.5L643.6 677.7L644.4 678.6L645.2 678.4L646.0 678.2L646.8 679.0L647.6 678.2L648.4 677.9L649.2 677.5L650.0 678.9L650.8 678.4L651.6 678.8L652.4 677.2L653.2 677.4L654.0 678.7L654.8 676.6L655.6 676.6L656.4 677.1L657.2 677.0L658.0 677.9L658.8 678.0L659.6 676.8L660.4 677.7L661.2 677.3L662.0 677.1L662.8 677.4L663.6 676.3L664.4 676.3L665.2 675.3L666.0 675.8L666.8 675.5L667.6 675.6L668.4 675.0L669.2 675.0L670.0 674.9L670.8 673.0L671.6 672.5L672.4 672.4L673.2 672.3L674.0 672.6L674.8 672.4L675.6 671.8L676.4 671.8L677.2 669.9L678.0 670.2L678.8 668.9L679.6 669.4L680.4 667.9L681.2 667.9L682.0 669.4L682.8 668.7L683.6 667.0L684.4 667.7L685.2 666.4L686.0 667.4L686.8 667.8L687.6 666.4L688.4 665.9L689.2 666.7L690.0 666.8L690.8 666.1L691.6 664.5L692.4 664.7L693.2 665.8L694.0 665.3L694.8 665.4L695.6 665.2L696.4 663.5L697.2 664.5L698.0 663.5L698.8 663.5L699.6 663.8L700.4 662.5L701.2 663.6L702.0 662.5L702.8 663.5L703.6 662.7L704.4 663.1L705.2 662.8L706.0 661.3L706.8 661.5L707.6 662.5L708.4 661.2L709.2 662.5L710.0 662.0L710.8 660.9L711.6 661.3L712.4 662.3L713.2 660.3L714.0 661.9L714.8 661.7L715.6 660.5L716.4 661.3L717.2 650.9L718.0 656.2L718.8 663.8L719.6 649.8L720.4 649.8L721.2 649.8L722.0 652.9L722.8 649.8L723.6 660.3L724.4 649.8L725.2 659.3L726.0 649.8L726.8 651.0L727.6 659.5L728.4 664.9L729.2 649.8L730.0 650.3L730.8 657.6L731.6 653.7L732.4 649.8L733.2 650.4L734.0 650.8L734.8 654.1L735.6 651.4L736.4 655.0L737.2 651.1L738.0 649.8L738.8 649.8L739.6 649.8L740.4 652.4L741.2 659.4L742.0 649.8L742.8 657.3L743.6 649.8L744.4 649.8L745.2 656.6L746.0 649.8L746.8 649.8L747.6 649.8L748.4 649.8L749.2 649.8L750.0 649.8L750.8 649.9L751.6 650.8L752.4 649.9L753.2 657.9L754.0 649.8L754.8 650.9L755.6 650.2L756.4 649.8L757.2 659.1L758.0 658.0L758.8 651.9L759.6 650.8L760.4 649.8L761.2 652.9L762.0 650.2L762.8 654.7L763.6 650.3L764.4 649.8L765.2 650.3L766.0 656.9L766.8 649.8L767.6 651.6L768.4 651.9L769.2 657.6L770.0 649.8L770.8 649.8L771.6 652.6L772.4 652.2L773.2 657.1L774.0 651.4L774.8 649.9L775.6 651.6L776.4 654.1L777.2 653.4L778.0 651.2L778.8 650.3L779.6 655.0L780.4 653.5L781.2 652.7L782.0 654.4L782.8 651.9L783.6 651.0L784.4 649.8L785.2 653.0L786.0 653.1L786.8 658.0L787.6 653.1L788.4 652.5L789.2 651.8L790.0 650.8L790.8 650.7L791.6 653.6L792.4 651.0L793.2 658.0L794.0 650.2L794.8 651.7L795.6 650.7L796.4 652.2L797.2 653.2L798.0 650.7L798.8 651.1L799.6 661.7L800.4 650.1L801.2 650.9L802.0 650.4L802.8 652.7L803.6 658.1L804.4 651.0L805.2 654.1L806.0 654.0L806.8 653.5L807.6 651.0L808.4 655.8L809.2 651.3L810.0 651.4L810.8 652.3L811.6 654.0L812.4 666.3L813.2 651.3L814.0 652.2L814.8 652.1L815.6 652.8L816.4 650.7L817.2 661.6L818.0 652.3L818.8 653.6L819.6 652.4L820.4 654.4L821.2 652.4L822.0 651.2L822.8 652.5L823.6 654.3L824.4 652.8L825.2 650.7L826.0 652.6L826.8 658.4L827.6 650.9L828.4 653.3L829.2 660.0L830.0 654.1L830.8 654.7L831.6 657.0L832.4 653.6L833.2 652.5L834.0 661.4L834.8 659.7L835.6 654.5L836.4 653.6L837.2 653.8L838.0 655.0L838.8 661.1L839.6 653.6L840.4 653.4L841.2 655.1L842.0 652.7L842.8 654.9L843.6 652.5L844.4 664.8L845.2 656.0L846.0 670.2L846.8 656.3L847.6 655.0L848.4 656.4L849.2 654.1L850.0 659.0L850.8 653.4L851.6 656.8L852.4 654.2L853.2 653.3L854.0 652.1L854.8 651.9L855.6 649.8L856.4 650.8L857.2 653.4L858.0 649.8L858.8 651.2L859.6 659.6L860.4 649.8L861.2 649.8L862.0 650.0L862.8 651.8L863.6 649.8L864.4 655.9L865.2 650.3L866.0 653.8L866.8 652.1L867.6 649.8L868.4 649.8L869.2 651.3L870.0 651.4L870.8 650.7L871.6 650.7L872.4 651.8L873.2 653.9L874.0 652.4L874.8 653.4L875.6 655.4L876.4 657.3L877.2 656.2L878.0 661.8L878.8 656.6L879.6 675.2L880.4 658.8L881.2 658.3L882.0 659.6L882.8 659.0L883.6 659.1L884.4 662.7L885.2 660.2L886.0 662.1L886.8 666.2L887.6 662.9L888.4 658.0L889.2 658.1L890.0 656.3L890.8 654.5L891.6 655.3L892.4 650.9L893.2 660.8L894.0 657.2L894.8 657.5L895.6 653.1L896.4 651.7L897.2 651.1L898.0 652.5L898.8 651.5L899.6 651.0L900.4 654.0L901.2 661.9L902.0 660.7L902.8 650.7L903.6 654.4L904.4 650.8L905.2 662.5L906.0 653.0L906.8 654.1L907.6 651.3L908.4 653.4L909.2 652.1L910.0 655.1L910.8 653.8L911.6 656.6L912.4 655.5L913.2 653.3L914.0 655.2L914.8 654.6L915.6 654.3L916.4 652.6L917.2 655.6L918.0 664.2L918.8 654.2L919.6 655.7L920.4 654.6L921.2 654.4L922.0 656.3L922.8 673.0L923.6 653.6L924.4 658.2L925.2 655.6L926.0 657.1L926.8 657.3L927.6 663.4L928.4 655.1L929.2 655.8L930.0 661.0L930.8 654.4L931.6 659.3L932.4 655.5L933.2 657.3L934.0 657.2L934.8 656.8L935.6 654.3L936.4 656.2L937.2 654.7L938.0 657.1L938.8 666.1L939.6 659.8L940.4 656.7L941.2 657.2L942.0 657.9L942.8 663.6L943.6 660.5L944.4 654.5L945.2 656.6L946.0 653.9L946.8 656.1L947.6 654.0L948.4 652.2L949.2 654.0L950.0 654.3L950.8 653.7L951.6 651.3L952.4 665.3L953.2 653.0L954.0 652.7L954.8 658.9L955.6 651.9L956.4 652.0L957.2 661.0L958.0 653.6L958.8 659.5L959.6 652.9L960.4 652.7L961.2 655.4L962.0 652.6L962.8 657.1L963.6 652.6L964.4 662.0L965.2 663.1L966.0 655.9L966.8 671.2L967.6 654.2L968.4 656.2L969.2 655.0L970.0 655.8L970.8 655.3L971.6 656.8L972.4 655.9L973.2 655.6L974.0 655.4L974.8 656.7L975.6 656.6L976.4 658.0L977.2 659.4L978.0 656.1L978.8 659.6L979.6 664.1L980.4 656.3L981.2 663.3L982.0 666.0L982.8 659.8L983.6 664.6L984.4 656.8L985.2 661.9L986.0 662.8L986.8 674.3L987.6 659.9L988.4 663.5L989.2 667.3L990.0 649.8L990.8 649.8L991.6 649.8L992.4 650.0L993.2 649.8L994.0 650.6L994.8 659.5L995.6 650.1L996.4 649.8L997.2 649.8L998.0 650.9L998.8 656.1L999.6 649.8L1000.4 649.8L1001.2 653.8L1002.0 651.2L1002.8 650.2L1003.6 649.8L1004.4 650.2L1005.2 659.0L1006.0 659.5L1006.8 649.8L1007.6 655.2L1008.4 652.4L1009.2 650.9L1010.0 650.5L1010.8 651.7L1011.6 651.3L1012.4 652.8L1013.2 652.3L1014.0 651.1L1014.8 660.4L1015.6 652.1L1016.4 656.3L1017.2 650.6L1018.0 650.8L1018.8 657.2L1019.6 649.8L1020.4 651.1L1021.2 657.3L1022.0 653.0L1022.8 652.1L1023.6 662.4L1024.4 653.3L1025.2 653.0L1026.0 652.1L1026.8 653.0L1027.6 651.7L1028.4 653.7L1029.2 653.2L1030.0 652.3L1030.8 653.4L1031.6 654.5L1032.4 656.2L1033.2 652.2L1034.0 658.9L1034.8 652.9L1035.6 657.7L1036.4 657.0L1037.2 655.5L1038.0 654.1L1038.8 653.3L1039.6 652.7L1040.4 654.9L1041.2 656.4L1042.0 653.6L1042.8 653.4L1043.6 654.3L1044.4 659.9L1045.2 654.3L1046.0 660.5L1046.8 654.0L1047.6 654.9L1048.4 664.0L1049.2 655.4L1050.0 655.7L1050.8 664.0L1051.6 655.9L1052.4 654.7L1053.2 666.2L1054.0 657.6L1054.8 660.9L1055.6 655.8L1056.4 654.9L1057.2 657.0L1058.0 667.2L1058.8 666.8L1059.6 657.0L1060.4 658.3L1061.2 655.4L1062.0 657.2L1062.8 666.8L1063.6 656.2L1064.4 672.4L1065.2 659.4L1066.0 660.0L1066.8 662.2L1067.6 656.6L1068.4 659.4L1069.2 657.7L1070.0 658.5L1070.8 660.9L1071.6 665.1L1072.4 664.5L1073.2 660.4L1074.0 660.0L1074.8 659.8L1075.6 661.0L1076.4 660.6L1077.2 658.8L1078.0 659.6L1078.8 658.5L1079.6 658.2L1080.4 657.3L1081.2 657.9L1082.0 659.7L1082.8 657.7L1083.6 659.4L1084.4 657.8L1085.2 661.4L1086.0 657.9L1086.8 659.2L1087.6 660.5L1088.4 661.5L1089.2 665.8L1090.0 660.2L1090.8 667.8L1091.6 660.9L1092.4 660.3L1093.2 669.9L1094.0 658.0L1094.8 658.5L1095.6 658.8L1096.4 676.0L1097.2 658.4L1098.0 668.9L1098.8 666.9L1099.6 662.3L1100.4 672.3L1101.2 662.1L1102.0 659.0L1102.8 660.9L1103.6 662.2L1104.4 670.0L1105.2 660.4L1106.0 658.4L1106.8 661.7L1107.6 658.7L1108.4 661.8L1109.2 661.1L1110.0 661.9L1110.8 658.5L1111.6 668.1L1112.4 670.1L1113.2 663.9L1114.0 661.4L1114.8 659.1L1115.6 662.2L1116.4 658.9L1117.2 662.5L1118.0 672.8L1118.8 662.1L1119.6 665.1L1120.4 659.6L1121.2 660.2L1122.0 660.5L1122.8 672.9L1123.6 657.9L1124.4 649.8L1125.2 659.6L1126.0 649.8L1126.8 651.5L1127.6 650.6L1128.4 649.8L1129.2 654.7L1130.0 651.1L1130.8 650.0L1131.6 659.9L1132.4 652.4L1133.2 649.8L1134.0 649.8L1134.8 652.2L1135.6 650.4L1136.4 650.4L1137.2 651.2L1138.0 649.9L1138.8 651.4L1139.6 653.0L1140.4 653.1L1141.2 653.0L1142.0 650.9L1142.8 650.9L1143.6 665.9L1144.4 666.8L1145.2 654.4L1146.0 651.7L1146.8 651.2L1147.6 656.5L1148.4 659.4L1149.2 653.4L1150.0 652.0L1150.8 663.2L1151.6 653.5L1152.4 655.0L1153.2 659.0L1154.0 659.3L1154.8 654.4L1155.6 654.3L1156.4 663.9L1157.2 659.6L1158.0 663.3L1158.8 654.3L1159.6 661.5L1160.4 657.1L1161.2 658.1L1162.0 655.3L1162.8 658.0L1163.6 655.7L1164.4 661.3L1165.2 658.7L1166.0 658.2L1166.8 659.3L1167.6 668.2L1168.4 657.0L1169.2 669.8L1170.0 659.5L1170.8 656.8L1171.6 659.5L1172.4 658.5L1173.2 664.9L1174.0 661.2L1174.8 658.8L1175.6 659.4L1176.4 660.2L1177.2 658.8L1178.0 659.3L1178.8 665.8L1179.6 667.7L1180.4 665.1L1181.2 667.4L1182.0 661.6L1182.8 660.8L1183.6 662.9L1184.4 663.6L1185.2 662.6L1186.0 664.2L1186.8 666.9L1187.6 660.8L1188.4 663.7L1189.2 664.3L1190.0 663.6L1190.8 662.3L1191.6 665.4L1192.4 664.0L1193.2 673.2L1194.0 662.8L1194.8 665.9L1195.6 665.3L1196.4 668.0L1197.2 651.1L1198.0 649.8L1198.8 650.8L1199.6 650.4L1200.4 649.8L1201.2 653.7L1202.0 649.8L1202.8 650.3L1203.6 651.1L1204.4 650.7L1205.2 652.9L1206.0 657.7L1206.8 649.8L1207.6 651.3L1208.4 649.8L1209.2 658.6L1210.0 649.8L1210.8 651.9L1211.6 652.6L1212.4 651.5L1213.2 656.6L1214.0 651.2L1214.8 652.7L1215.6 651.5L1216.4 659.3L1217.2 661.8L1218.0 652.0L1218.8 658.9L1219.6 651.7L1220.4 654.0L1221.2 652.7L1222.0 657.9L1222.8 658.7L1223.6 652.5L1224.4 653.5L1225.2 657.8L1226.0 652.5L1226.8 652.2L1227.6 659.2L1228.4 651.3L1229.2 653.0L1230.0 652.3L1230.8 653.1L1231.6 654.1L1232.4 652.5L1233.2 654.5L1234.0 656.0L1234.8 660.7L1235.6 655.0L1236.4 656.0L1237.2 658.9L1238.0 655.9L1238.8 661.7L1239.6 656.1L1240.4 654.6L1241.2 654.8L1242.0 654.1L1242.8 656.3L1243.6 654.1L1244.4 655.0L1245.2 655.2L1246.0 654.8L1246.8 663.7L1247.6 656.1L1248.4 657.4L1249.2 656.5L1250.0 668.4L1250.8 658.3L1251.6 658.6L1252.4 660.2L1253.2 665.4L1254.0 663.5L1254.8 657.7L1255.6 667.1L1256.4 659.8L1257.2 658.0L1258.0 658.6L1258.8 659.3L1259.6 659.2L1260.4 657.5L1261.2 657.3L1262.0 659.2L1262.8 650.5L1263.6 649.8L1264.4 654.7L1265.2 650.5L1266.0 652.0L1266.8 649.8L1267.6 651.2L1268.4 650.1L1269.2 650.3L1270.0 649.8L1270.8 658.3L1271.6 653.0L1272.4 649.8L1273.2 652.0L1274.0 652.5L1274.8 650.7L1275.6 651.5L1276.4 649.8L1277.2 651.4L1278.0 649.9L1278.8 651.6L1279.6 651.1L1280.4 652.8L1281.2 654.7L1282.0 652.6L1282.8 653.2L1283.6 653.8L1284.4 653.4L1285.2 652.9L1286.0 665.7L1286.8 653.2L1287.6 655.2L1288.4 653.2L1289.2 656.4L1290.0 650.5L1290.8 662.0L1291.6 653.1L1292.4 653.2L1293.2 659.7L1294.0 652.4L1294.8 651.2L1295.6 651.0L1296.4 651.7L1297.2 654.6L1298.0 657.1L1298.8 656.4L1299.6 652.4L1300.4 653.4L1301.2 657.7L1302.0 655.7L1302.8 652.4L1303.6 652.8L1304.4 652.6L1305.2 652.8L1306.0 655.6L1306.8 654.5L1307.6 655.2L1308.4 656.2L1309.2 655.4L1310.0 654.9L1310.8 652.8L1311.6 653.3L1312.4 654.6L1313.2 654.2L1314.0 658.4L1314.8 654.3L1315.6 652.7L1316.4 654.0L1317.2 656.0L1318.0 652.5L1318.8 658.5L1319.6 652.6L1320.4 649.8L1321.2 660.9L1322.0 650.1L1322.8 661.3L1323.3 684.6Z" fill="#20c49a"/><path d="M642 720.3L642.0 714.5L642.8 714.2L643.6 713.4L644.4 714.3L645.2 714.1L646.0 713.9L646.8 714.7L647.6 713.9L648.4 713.6L649.2 713.2L650.0 714.6L650.8 714.1L651.6 714.5L652.4 712.9L653.2 713.1L654.0 714.4L654.8 712.4L655.6 712.3L656.4 712.8L657.2 712.8L658.0 713.6L658.8 713.8L659.6 712.6L660.4 713.4L661.2 713.0L662.0 712.8L662.8 713.1L663.6 712.1L664.4 712.0L665.2 711.0L666.0 711.6L666.8 711.2L667.6 711.3L668.4 710.7L669.2 710.7L670.0 710.6L670.8 708.7L671.6 708.3L672.4 708.2L673.2 708.0L674.0 708.4L674.8 708.1L675.6 707.5L676.4 707.6L677.2 705.7L678.0 706.0L678.8 704.6L679.6 705.1L680.4 703.6L681.2 703.6L682.0 705.1L682.8 704.5L683.6 702.8L684.4 703.4L685.2 702.2L686.0 703.1L686.8 703.6L687.6 702.2L688.4 701.6L689.2 702.5L690.0 702.6L690.8 701.8L691.6 700.3L692.4 700.5L693.2 701.6L694.0 701.1L694.8 701.2L695.6 701.0L696.4 699.2L697.2 700.3L698.0 699.3L698.8 699.2L699.6 699.5L700.4 698.3L701.2 699.4L702.0 698.2L702.8 699.2L703.6 698.5L704.4 698.8L705.2 698.6L706.0 697.0L706.8 697.3L707.6 698.2L708.4 696.9L709.2 698.2L710.0 697.7L710.8 696.7L711.6 697.0L712.4 698.1L713.2 696.1L714.0 697.6L714.8 697.4L715.6 696.2L716.4 697.1L717.2 686.7L718.0 692.0L718.8 699.5L719.6 685.6L720.4 685.6L721.2 685.6L722.0 688.7L722.8 685.6L723.6 696.1L724.4 685.6L725.2 695.1L726.0 685.6L726.8 686.8L727.6 695.3L728.4 700.7L729.2 685.6L730.0 686.1L730.8 693.4L731.6 689.5L732.4 685.6L733.2 686.2L734.0 686.6L734.8 689.9L735.6 687.2L736.4 690.8L737.2 686.9L738.0 685.6L738.8 685.6L739.6 685.6L740.4 688.2L741.2 695.2L742.0 685.6L742.8 693.1L743.6 685.6L744.4 685.6L745.2 692.4L746.0 685.6L746.8 685.6L747.6 685.6L748.4 685.6L749.2 685.6L750.0 685.6L750.8 685.7L751.6 686.5L752.4 685.7L753.2 693.7L754.0 685.6L754.8 686.7L755.6 686.0L756.4 685.6L757.2 694.9L758.0 693.7L758.8 687.7L759.6 686.6L760.4 685.6L761.2 688.7L762.0 686.0L762.8 690.5L763.6 686.1L764.4 685.6L765.2 686.1L766.0 692.7L766.8 685.6L767.6 687.4L768.4 687.7L769.2 693.4L770.0 685.6L770.8 685.6L771.6 688.4L772.4 688.0L773.2 692.8L774.0 687.2L774.8 685.7L775.6 687.4L776.4 689.9L777.2 689.1L778.0 687.0L778.8 686.1L779.6 690.8L780.4 689.3L781.2 688.5L782.0 690.2L782.8 687.7L783.6 686.8L784.4 685.6L785.2 688.8L786.0 688.9L786.8 693.8L787.6 688.9L788.4 688.3L789.2 687.6L790.0 686.6L790.8 686.5L791.6 689.4L792.4 686.8L793.2 693.8L794.0 686.0L794.8 687.5L795.6 686.5L796.4 687.9L797.2 689.0L798.0 686.5L798.8 686.9L799.6 697.5L800.4 685.9L801.2 686.7L802.0 686.2L802.8 688.5L803.6 693.9L804.4 686.8L805.2 689.9L806.0 689.8L806.8 689.3L807.6 686.8L808.4 691.6L809.2 687.1L810.0 687.2L810.8 688.1L811.6 689.8L812.4 702.0L813.2 687.1L814.0 688.0L814.8 687.9L815.6 688.6L816.4 686.5L817.2 697.4L818.0 688.1L818.8 689.4L819.6 688.2L820.4 690.2L821.2 688.2L822.0 687.0L822.8 688.3L823.6 690.1L824.4 688.6L825.2 686.5L826.0 688.4L826.8 694.2L827.6 686.7L828.4 689.1L829.2 695.7L830.0 689.9L830.8 690.5L831.6 692.8L832.4 689.4L833.2 688.3L834.0 697.1L834.8 695.5L835.6 690.3L836.4 689.4L837.2 689.6L838.0 690.8L838.8 696.9L839.6 689.4L840.4 689.2L841.2 690.8L842.0 688.5L842.8 690.7L843.6 688.3L844.4 700.5L845.2 691.7L846.0 706.0L846.8 692.1L847.6 690.8L848.4 692.2L849.2 689.9L850.0 694.8L850.8 689.2L851.6 692.6L852.4 690.0L853.2 689.1L854.0 687.9L854.8 687.7L855.6 685.6L856.4 686.6L857.2 689.2L858.0 685.6L858.8 686.9L859.6 695.3L860.4 685.6L861.2 685.6L862.0 685.8L862.8 687.6L863.6 685.6L864.4 691.7L865.2 686.1L866.0 689.5L866.8 687.9L867.6 685.6L868.4 685.6L869.2 687.1L870.0 687.2L870.8 686.5L871.6 686.5L872.4 687.6L873.2 689.7L874.0 688.2L874.8 689.2L875.6 691.2L876.4 693.1L877.2 692.0L878.0 697.6L878.8 692.3L879.6 710.9L880.4 694.5L881.2 694.1L882.0 695.4L882.8 694.8L883.6 694.8L884.4 698.4L885.2 695.9L886.0 697.9L886.8 702.0L887.6 698.6L888.4 693.7L889.2 693.9L890.0 692.1L890.8 690.3L891.6 691.1L892.4 686.7L893.2 696.5L894.0 693.0L894.8 693.3L895.6 688.9L896.4 687.5L897.2 686.9L898.0 688.3L898.8 687.3L899.6 686.8L900.4 689.8L901.2 697.7L902.0 696.5L902.8 686.5L903.6 690.2L904.4 686.6L905.2 698.2L906.0 688.8L906.8 689.9L907.6 687.1L908.4 689.2L909.2 687.9L910.0 690.9L910.8 689.6L911.6 692.4L912.4 691.3L913.2 689.1L914.0 690.9L914.8 690.4L915.6 690.0L916.4 688.4L917.2 691.4L918.0 700.0L918.8 690.0L919.6 691.5L920.4 690.4L921.2 690.2L922.0 692.1L922.8 708.7L923.6 689.4L924.4 693.9L925.2 691.4L926.0 692.8L926.8 693.0L927.6 699.2L928.4 690.9L929.2 691.6L930.0 696.7L930.8 690.2L931.6 695.1L932.4 691.3L933.2 693.1L934.0 693.0L934.8 692.6L935.6 690.1L936.4 692.0L937.2 690.5L938.0 692.9L938.8 701.8L939.6 695.6L940.4 692.5L941.2 693.0L942.0 693.7L942.8 699.3L943.6 696.2L944.4 690.3L945.2 692.3L946.0 689.7L946.8 691.9L947.6 689.8L948.4 688.0L949.2 689.8L950.0 690.1L950.8 689.5L951.6 687.1L952.4 701.0L953.2 688.8L954.0 688.5L954.8 694.7L955.6 687.7L956.4 687.8L957.2 696.8L958.0 689.4L958.8 695.3L959.6 688.7L960.4 688.5L961.2 691.2L962.0 688.4L962.8 692.9L963.6 688.4L964.4 697.7L965.2 698.8L966.0 691.7L966.8 706.9L967.6 690.0L968.4 692.0L969.2 690.8L970.0 691.6L970.8 691.1L971.6 692.6L972.4 691.7L973.2 691.4L974.0 691.2L974.8 692.5L975.6 692.4L976.4 693.8L977.2 695.2L978.0 691.9L978.8 695.4L979.6 699.8L980.4 692.1L981.2 699.0L982.0 701.8L982.8 695.6L983.6 700.4L984.4 692.6L985.2 697.7L986.0 698.6L986.8 710.1L987.6 695.7L988.4 699.2L989.2 703.1L990.0 685.6L990.8 685.6L991.6 685.6L992.4 685.8L993.2 685.6L994.0 686.4L994.8 695.3L995.6 685.9L996.4 685.6L997.2 685.6L998.0 686.7L998.8 691.9L999.6 685.6L1000.4 685.6L1001.2 689.6L1002.0 686.9L1002.8 685.9L1003.6 685.6L1004.4 686.0L1005.2 694.8L1006.0 695.3L1006.8 685.6L1007.6 691.0L1008.4 688.2L1009.2 686.7L1010.0 686.3L1010.8 687.5L1011.6 687.1L1012.4 688.6L1013.2 688.1L1014.0 686.9L1014.8 696.1L1015.6 687.9L1016.4 692.1L1017.2 686.4L1018.0 686.6L1018.8 693.0L1019.6 685.6L1020.4 686.9L1021.2 693.1L1022.0 688.8L1022.8 687.9L1023.6 698.2L1024.4 689.1L1025.2 688.8L1026.0 687.9L1026.8 688.8L1027.6 687.5L1028.4 689.5L1029.2 689.0L1030.0 688.1L1030.8 689.2L1031.6 690.3L1032.4 691.9L1033.2 688.0L1034.0 694.6L1034.8 688.7L1035.6 693.5L1036.4 692.8L1037.2 691.3L1038.0 689.9L1038.8 689.1L1039.6 688.5L1040.4 690.7L1041.2 692.1L1042.0 689.4L1042.8 689.2L1043.6 690.0L1044.4 695.7L1045.2 690.1L1046.0 696.3L1046.8 689.8L1047.6 690.7L1048.4 699.8L1049.2 691.2L1050.0 691.5L1050.8 699.7L1051.6 691.7L1052.4 690.5L1053.2 702.0L1054.0 693.4L1054.8 696.6L1055.6 691.6L1056.4 690.7L1057.2 692.8L1058.0 702.9L1058.8 702.5L1059.6 692.7L1060.4 694.1L1061.2 691.2L1062.0 693.0L1062.8 702.5L1063.6 692.0L1064.4 708.1L1065.2 695.2L1066.0 695.8L1066.8 698.0L1067.6 692.4L1068.4 695.2L1069.2 693.5L1070.0 694.2L1070.8 696.7L1071.6 700.9L1072.4 700.2L1073.2 696.1L1074.0 695.8L1074.8 695.5L1075.6 696.8L1076.4 696.4L1077.2 694.5L1078.0 695.4L1078.8 694.2L1079.6 694.0L1080.4 693.0L1081.2 693.7L1082.0 695.5L1082.8 693.5L1083.6 695.1L1084.4 693.6L1085.2 697.2L1086.0 693.7L1086.8 695.0L1087.6 696.2L1088.4 697.3L1089.2 701.5L1090.0 696.0L1090.8 703.6L1091.6 696.7L1092.4 696.1L1093.2 705.7L1094.0 693.8L1094.8 694.2L1095.6 694.5L1096.4 711.7L1097.2 694.2L1098.0 704.7L1098.8 702.7L1099.6 698.1L1100.4 708.0L1101.2 697.9L1102.0 694.8L1102.8 696.7L1103.6 698.0L1104.4 705.7L1105.2 696.2L1106.0 694.2L1106.8 697.4L1107.6 694.5L1108.4 697.5L1109.2 696.9L1110.0 697.7L1110.8 694.3L1111.6 703.8L1112.4 705.8L1113.2 699.7L1114.0 697.2L1114.8 694.9L1115.6 698.0L1116.4 694.7L1117.2 698.3L1118.0 708.6L1118.8 697.8L1119.6 700.9L1120.4 695.4L1121.2 696.0L1122.0 696.3L1122.8 708.7L1123.6 693.6L1124.4 685.6L1125.2 695.4L1126.0 685.6L1126.8 687.2L1127.6 686.4L1128.4 685.6L1129.2 690.4L1130.0 686.9L1130.8 685.8L1131.6 695.7L1132.4 688.2L1133.2 685.6L1134.0 685.6L1134.8 688.0L1135.6 686.2L1136.4 686.2L1137.2 687.0L1138.0 685.7L1138.8 687.2L1139.6 688.8L1140.4 688.9L1141.2 688.8L1142.0 686.7L1142.8 686.7L1143.6 701.7L1144.4 702.6L1145.2 690.2L1146.0 687.5L1146.8 687.0L1147.6 692.3L1148.4 695.2L1149.2 689.2L1150.0 687.8L1150.8 698.9L1151.6 689.3L1152.4 690.8L1153.2 694.8L1154.0 695.0L1154.8 690.2L1155.6 690.1L1156.4 699.7L1157.2 695.4L1158.0 699.0L1158.8 690.1L1159.6 697.2L1160.4 692.9L1161.2 693.8L1162.0 691.0L1162.8 693.8L1163.6 691.5L1164.4 697.1L1165.2 694.4L1166.0 694.0L1166.8 695.1L1167.6 703.9L1168.4 692.8L1169.2 705.5L1170.0 695.2L1170.8 692.6L1171.6 695.2L1172.4 694.3L1173.2 700.6L1174.0 697.0L1174.8 694.6L1175.6 695.2L1176.4 695.9L1177.2 694.6L1178.0 695.0L1178.8 701.6L1179.6 703.4L1180.4 700.8L1181.2 703.1L1182.0 697.3L1182.8 696.5L1183.6 698.7L1184.4 699.4L1185.2 698.4L1186.0 700.0L1186.8 702.7L1187.6 696.5L1188.4 699.4L1189.2 700.1L1190.0 699.4L1190.8 698.0L1191.6 701.1L1192.4 699.8L1193.2 709.0L1194.0 698.5L1194.8 701.7L1195.6 701.1L1196.4 703.8L1197.2 686.9L1198.0 685.6L1198.8 686.6L1199.6 686.2L1200.4 685.6L1201.2 689.5L1202.0 685.6L1202.8 686.1L1203.6 686.9L1204.4 686.5L1205.2 688.7L1206.0 693.5L1206.8 685.6L1207.6 687.1L1208.4 685.6L1209.2 694.3L1210.0 685.6L1210.8 687.7L1211.6 688.4L1212.4 687.3L1213.2 692.4L1214.0 687.0L1214.8 688.5L1215.6 687.3L1216.4 695.0L1217.2 697.6L1218.0 687.8L1218.8 694.7L1219.6 687.5L1220.4 689.8L1221.2 688.5L1222.0 693.7L1222.8 694.5L1223.6 688.3L1224.4 689.3L1225.2 693.6L1226.0 688.3L1226.8 688.0L1227.6 695.0L1228.4 687.1L1229.2 688.8L1230.0 688.1L1230.8 688.9L1231.6 689.8L1232.4 688.3L1233.2 690.3L1234.0 691.8L1234.8 696.5L1235.6 690.7L1236.4 691.8L1237.2 694.7L1238.0 691.7L1238.8 697.5L1239.6 691.9L1240.4 690.4L1241.2 690.6L1242.0 689.9L1242.8 692.1L1243.6 689.9L1244.4 690.8L1245.2 691.0L1246.0 690.6L1246.8 699.4L1247.6 691.9L1248.4 693.2L1249.2 692.3L1250.0 704.1L1250.8 694.1L1251.6 694.4L1252.4 696.0L1253.2 701.2L1254.0 699.3L1254.8 693.5L1255.6 702.9L1256.4 695.5L1257.2 693.8L1258.0 694.4L1258.8 695.1L1259.6 694.9L1260.4 693.3L1261.2 693.1L1262.0 695.0L1262.8 686.3L1263.6 685.6L1264.4 690.5L1265.2 686.3L1266.0 687.8L1266.8 685.6L1267.6 687.0L1268.4 685.9L1269.2 686.1L1270.0 685.6L1270.8 694.0L1271.6 688.8L1272.4 685.6L1273.2 687.8L1274.0 688.3L1274.8 686.5L1275.6 687.3L1276.4 685.6L1277.2 687.2L1278.0 685.7L1278.8 687.4L1279.6 686.8L1280.4 688.6L1281.2 690.5L1282.0 688.4L1282.8 689.0L1283.6 689.6L1284.4 689.1L1285.2 688.7L1286.0 701.4L1286.8 689.0L1287.6 691.0L1288.4 689.0L1289.2 692.2L1290.0 686.3L1290.8 697.8L1291.6 688.9L1292.4 689.0L1293.2 695.5L1294.0 688.2L1294.8 687.0L1295.6 686.8L1296.4 687.5L1297.2 690.4L1298.0 692.8L1298.8 692.2L1299.6 688.2L1300.4 689.2L1301.2 693.5L1302.0 691.5L1302.8 688.2L1303.6 688.6L1304.4 688.4L1305.2 688.6L1306.0 691.4L1306.8 690.2L1307.6 690.9L1308.4 692.0L1309.2 691.2L1310.0 690.7L1310.8 688.6L1311.6 689.1L1312.4 690.4L1313.2 690.0L1314.0 694.2L1314.8 690.1L1315.6 688.5L1316.4 689.8L1317.2 691.8L1318.0 688.3L1318.8 694.3L1319.6 688.3L1320.4 685.6L1321.2 696.6L1322.0 685.9L1322.8 697.1L1323.3 720.3Z" fill="#20c49a"/><rect x="642" y="676.700" width="681.3" height="3" fill="#3fd3ad" opacity=".55"/><rect x="642" y="677.500" width="681.3" height="1.100" fill="#8eeed4"/><rect x="642" y="678.600" width="681.3" height="1" fill="#17a580" opacity=".8"/><rect x="642" y="684.600" width="681.3" height="1" fill="#35cba3" opacity=".6"/></svg>
<svg style="left:649.5px;top:653px;" width="9" height="8.5" viewBox="0 0 9 8.5"><rect width="9" height="8.500" rx="0.800" fill="#5d8377"/><rect x="1.800" y="1.800" width="5.400" height="5" fill="none" stroke="#9fc4b7" stroke-width="0.900"/></svg>
<div class="a" style="left:643px;top:673px;width:8px;height:8px;background:#15604a;"></div>
<div class="a" id="t89" style="top:672.8px;font-size:6.5px;line-height:9px;height:9px;color:#a7d9c8;left:644.5px;font-weight:500;">L</div>
<div class="a" style="left:643px;top:709px;width:8px;height:8px;background:#15604a;"></div>
<div class="a" id="t90" style="top:708.8px;font-size:6.5px;line-height:9px;height:9px;color:#a7d9c8;left:644.5px;font-weight:500;">R</div>
<div class="a" style="left:767px;top:530px;width:1.3px;height:236px;background:#3b86e3;"></div>
<svg style="left:762.5px;top:521.2px;" width="16" height="10" viewBox="0 0 16 10"><path d="M0 0h9v6h6.500l-1.800 2.200H5.500L4.700 9 2.500 8.200 0 6z" fill="#2d8ceb"/></svg>
<div class="a" style="left:1323.5px;top:545px;width:9px;height:97px;background:#303030;border-radius:4px"></div>
<div class="a" style="left:1323.5px;top:658px;width:9px;height:97px;background:#303030;border-radius:4px"></div>
<svg style="left:1323.3px;top:538.0px;" width="9" height="9" viewBox="0 0 9 9"><circle cx="4.500" cy="4.500" r="3.100" fill="#242424" stroke="#b5b5b5" stroke-width="1.500"/></svg>
<svg style="left:1323.3px;top:637.5px;" width="9" height="9" viewBox="0 0 9 9"><circle cx="4.500" cy="4.500" r="3.100" fill="#242424" stroke="#b5b5b5" stroke-width="1.500"/></svg>
<svg style="left:1323.3px;top:651.0px;" width="9" height="9" viewBox="0 0 9 9"><circle cx="4.500" cy="4.500" r="3.100" fill="#242424" stroke="#b5b5b5" stroke-width="1.500"/></svg>
<svg style="left:1323.3px;top:752.5px;" width="9" height="9" viewBox="0 0 9 9"><circle cx="4.500" cy="4.500" r="3.100" fill="#242424" stroke="#b5b5b5" stroke-width="1.500"/></svg>
<!-- AUDIO METERS -->
<div class="a" style="left:1341.5px;top:478px;width:2px;height:306px;background:#181818;"></div>
<div class="a" style="left:1353px;top:497px;width:45px;height:260.5px;background:#1b1b1b;"></div>
<div class="a" style="left:1353px;top:497.2px;width:21.8px;height:6.8px;background:#f0524c;"></div>
<div class="a" style="left:1376px;top:497.2px;width:22px;height:6.8px;background:#f0524c;"></div>
<div class="a" style="left:1374.8px;top:504px;width:1.2px;height:253px;background:#232323;"></div>
<div class="a" style="left:1353px;top:756.8px;width:45.5px;height:1.6px;background:#c8d44a;"></div>
<svg style="left:1399px;top:504px;" width="2" height="254" viewBox="0 0 2 254"><rect x="0" y="0.00" width="1.200" height="1.200" fill="#b9b9b9"/><rect x="0" y="2.53" width="1.200" height="1.200" fill="#b9b9b9"/><rect x="0" y="5.06" width="1.200" height="1.200" fill="#b9b9b9"/><rect x="0" y="7.59" width="1.200" height="1.200" fill="#b9b9b9"/><rect x="0" y="10.12" width="1.200" height="1.200" fill="#b9b9b9"/><rect x="0" y="12.65" width="1.200" height="1.200" fill="#b9b9b9"/><rect x="0" y="15.18" width="1.200" height="1.200" fill="#b9b9b9"/><rect x="0" y="17.71" width="1.200" height="1.200" fill="#b9b9b9"/><rect x="0" y="20.24" width="1.200" height="1.200" fill="#b9b9b9"/><rect x="0" y="22.77" width="1.200" height="1.200" fill="#b9b9b9"/><rect x="0" y="25.30" width="1.200" height="1.200" fill="#b9b9b9"/><rect x="0" y="27.83" width="1.200" height="1.200" fill="#b9b9b9"/><rect x="0" y="30.36" width="1.200" height="1.200" fill="#b9b9b9"/><rect x="0" y="32.89" width="1.200" height="1.200" fill="#b9b9b9"/><rect x="0" y="35.42" width="1.200" height="1.200" fill="#b9b9b9"/><rect x="0" y="37.95" width="1.200" height="1.200" fill="#b9b9b9"/><rect x="0" y="40.48" width="1.200" height="1.200" fill="#b9b9b9"/><rect x="0" y="43.01" width="1.200" height="1.200" fill="#b9b9b9"/><rect x="0" y="45.54" width="1.200" height="1.200" fill="#b9b9b9"/><rect x="0" y="48.07" width="1.200" height="1.200" fill="#b9b9b9"/><rect x="0" y="50.60" width="1.200" height="1.200" fill="#b9b9b9"/><rect x="0" y="53.13" width="1.200" height="1.200" fill="#b9b9b9"/><rect x="0" y="55.66" width="1.200" height="1.200" fill="#b9b9b9"/><rect x="0" y="58.19" width="1.200" height="1.200" fill="#b9b9b9"/><rect x="0" y="60.72" width="1.200" height="1.200" fill="#b9b9b9"/><rect x="0" y="63.25" width="1.200" height="1.200" fill="#b9b9b9"/><rect x="0" y="65.78" width="1.200" height="1.200" fill="#b9b9b9"/><rect x="0" y="68.31" width="1.200" height="1.200" fill="#b9b9b9"/><rect x="0" y="70.84" width="1.200" height="1.200" fill="#b9b9b9"/><rect x="0" y="73.37" width="1.200" height="1.200" fill="#b9b9b9"/><rect x="0" y="75.90" width="1.200" height="1.200" fill="#b9b9b9"/><rect x="0" y="78.43" width="1.200" height="1.200" fill="#b9b9b9"/><rect x="0" y="80.96" width="1.200" height="1.200" fill="#b9b9b9"/><rect x="0" y="83.49" width="1.200" height="1.200" fill="#b9b9b9"/><rect x="0" y="86.02" width="1.200" height="1.200" fill="#b9b9b9"/><rect x="0" y="88.55" width="1.200" height="1.200" fill="#b9b9b9"/><rect x="0" y="91.08" width="1.200" height="1.200" fill="#b9b9b9"/><rect x="0" y="93.61" width="1.200" height="1.200" fill="#b9b9b9"/><rect x="0" y="96.14" width="1.200" height="1.200" fill="#b9b9b9"/><rect x="0" y="98.67" width="1.200" height="1.200" fill="#b9b9b9"/><rect x="0" y="101.20" width="1.200" height="1.200" fill="#b9b9b9"/><rect x="0" y="103.73" width="1.200" height="1.200" fill="#b9b9b9"/><rect x="0" y="106.26" width="1.200" height="1.200" fill="#b9b9b9"/><rect x="0" y="108.79" width="1.200" height="1.200" fill="#b9b9b9"/><rect x="0" y="111.32" width="1.200" height="1.200" fill="#b9b9b9"/><rect x="0" y="113.85" width="1.200" height="1.200" fill="#b9b9b9"/><rect x="0" y="116.38" width="1.200" height="1.200" fill="#b9b9b9"/><rect x="0" y="118.91" width="1.200" height="1.200" fill="#b9b9b9"/><rect x="0" y="121.44" width="1.200" height="1.200" fill="#b9b9b9"/><rect x="0" y="123.97" width="1.200" height="1.200" fill="#b9b9b9"/><rect x="0" y="126.50" width="1.200" height="1.200" fill="#b9b9b9"/><rect x="0" y="129.03" width="1.200" height="1.200" fill="#b9b9b9"/><rect x="0" y="131.56" width="1.200" height="1.200" fill="#b9b9b9"/><rect x="0" y="134.09" width="1.200" height="1.200" fill="#b9b9b9"/><rect x="0" y="136.62" width="1.200" height="1.200" fill="#b9b9b9"/><rect x="0" y="139.15" width="1.200" height="1.200" fill="#b9b9b9"/><rect x="0" y="141.68" width="1.200" height="1.200" fill="#b9b9b9"/><rect x="0" y="144.21" width="1.200" height="1.200" fill="#b9b9b9"/><rect x="0" y="146.74" width="1.200" height="1.200" fill="#b9b9b9"/><rect x="0" y="149.27" width="1.200" height="1.200" fill="#b9b9b9"/><rect x="0" y="151.80" width="1.200" height="1.200" fill="#b9b9b9"/><rect x="0" y="154.33" width="1.200" height="1.200" fill="#b9b9b9"/><rect x="0" y="156.86" width="1.200" height="1.200" fill="#b9b9b9"/><rect x="0" y="159.39" width="1.200" height="1.200" fill="#b9b9b9"/><rect x="0" y="161.92" width="1.200" height="1.200" fill="#b9b9b9"/><rect x="0" y="164.45" width="1.200" height="1.200" fill="#b9b9b9"/><rect x="0" y="166.98" width="1.200" height="1.200" fill="#b9b9b9"/><rect x="0" y="169.51" width="1.200" height="1.200" fill="#b9b9b9"/><rect x="0" y="172.04" width="1.200" height="1.200" fill="#b9b9b9"/><rect x="0" y="174.57" width="1.200" height="1.200" fill="#b9b9b9"/><rect x="0" y="177.10" width="1.200" height="1.200" fill="#b9b9b9"/><rect x="0" y="179.63" width="1.200" height="1.200" fill="#b9b9b9"/><rect x="0" y="182.16" width="1.200" height="1.200" fill="#b9b9b9"/><rect x="0" y="184.69" width="1.200" height="1.200" fill="#b9b9b9"/><rect x="0" y="187.22" width="1.200" height="1.200" fill="#b9b9b9"/><rect x="0" y="189.75" width="1.200" height="1.200" fill="#b9b9b9"/><rect x="0" y="192.28" width="1.200" height="1.200" fill="#b9b9b9"/><rect x="0" y="194.81" width="1.200" height="1.200" fill="#b9b9b9"/><rect x="0" y="197.34" width="1.200" height="1.200" fill="#b9b9b9"/><rect x="0" y="199.87" width="1.200" height="1.200" fill="#b9b9b9"/><rect x="0" y="202.40" width="1.200" height="1.200" fill="#b9b9b9"/><rect x="0" y="204.93" width="1.200" height="1.200" fill="#b9b9b9"/><rect x="0" y="207.46" width="1.200" height="1.200" fill="#b9b9b9"/><rect x="0" y="209.99" width="1.200" height="1.200" fill="#b9b9b9"/><rect x="0" y="212.52" width="1.200" height="1.200" fill="#b9b9b9"/><rect x="0" y="215.05" width="1.200" height="1.200" fill="#b9b9b9"/><rect x="0" y="217.58" width="1.200" height="1.200" fill="#b9b9b9"/><rect x="0" y="220.11" width="1.200" height="1.200" fill="#b9b9b9"/><rect x="0" y="222.64" width="1.200" height="1.200" fill="#b9b9b9"/><rect x="0" y="225.17" width="1.200" height="1.200" fill="#b9b9b9"/><rect x="0" y="227.70" width="1.200" height="1.200" fill="#b9b9b9"/><rect x="0" y="230.23" width="1.200" height="1.200" fill="#b9b9b9"/><rect x="0" y="232.76" width="1.200" height="1.200" fill="#b9b9b9"/><rect x="0" y="235.29" width="1.200" height="1.200" fill="#b9b9b9"/><rect x="0" y="237.82" width="1.200" height="1.200" fill="#b9b9b9"/><rect x="0" y="240.35" width="1.200" height="1.200" fill="#b9b9b9"/><rect x="0" y="242.88" width="1.200" height="1.200" fill="#b9b9b9"/><rect x="0" y="245.41" width="1.200" height="1.200" fill="#b9b9b9"/><rect x="0" y="247.94" width="1.200" height="1.200" fill="#b9b9b9"/><rect x="0" y="250.47" width="1.200" height="1.200" fill="#b9b9b9"/><rect x="0" y="253.00" width="1.200" height="1.200" fill="#b9b9b9"/></svg>
<div class="a" style="left:1400.5px;top:504.2px;width:2.5px;height:1px;background:#b9b9b9;"></div>
<div class="a" id="t91" style="top:499.7px;font-size:7.4px;line-height:10px;height:10px;color:#9a9a9a;left:1404px;">0</div>
<div class="a" style="left:1400.5px;top:529.5px;width:2.5px;height:1px;background:#b9b9b9;"></div>
<div class="a" id="t92" style="top:525.0px;font-size:7.4px;line-height:10px;height:10px;color:#9a9a9a;left:1403.5px;">-6</div>
<div class="a" style="left:1400.5px;top:554.8px;width:2.5px;height:1px;background:#b9b9b9;"></div>
<div class="a" id="t93" style="top:550.3px;font-size:7.4px;line-height:10px;height:10px;color:#9a9a9a;left:1403.5px;">-12</div>
<div class="a" style="left:1400.5px;top:580.1px;width:2.5px;height:1px;background:#b9b9b9;"></div>
<div class="a" id="t94" style="top:575.6px;font-size:7.4px;line-height:10px;height:10px;color:#9a9a9a;left:1403.5px;">-18</div>
<div class="a" style="left:1400.5px;top:605.4px;width:2.5px;height:1px;background:#b9b9b9;"></div>
<div class="a" id="t95" style="top:600.9px;font-size:7.4px;line-height:10px;height:10px;color:#9a9a9a;left:1403.5px;">-24</div>
<div class="a" style="left:1400.5px;top:630.7px;width:2.5px;height:1px;background:#b9b9b9;"></div>
<div class="a" id="t96" style="top:626.2px;font-size:7.4px;line-height:10px;height:10px;color:#9a9a9a;left:1403.5px;">-30</div>
<div class="a" style="left:1400.5px;top:656.0px;width:2.5px;height:1px;background:#b9b9b9;"></div>
<div class="a" id="t97" style="top:651.5px;font-size:7.4px;line-height:10px;height:10px;color:#9a9a9a;left:1403.5px;">-36</div>
<div class="a" style="left:1400.5px;top:681.3px;width:2.5px;height:1px;background:#b9b9b9;"></div>
<div class="a" id="t98" style="top:676.8px;font-size:7.4px;line-height:10px;height:10px;color:#9a9a9a;left:1403.5px;">-42</div>
<div class="a" style="left:1400.5px;top:706.6px;width:2.5px;height:1px;background:#b9b9b9;"></div>
<div class="a" id="t99" style="top:702.1px;font-size:7.4px;line-height:10px;height:10px;color:#9a9a9a;left:1403.5px;">-48</div>
<div class="a" style="left:1400.5px;top:731.9px;width:2.5px;height:1px;background:#b9b9b9;"></div>
<div class="a" id="t100" style="top:727.4px;font-size:7.4px;line-height:10px;height:10px;color:#9a9a9a;left:1403.5px;">-54</div>
<div class="a" id="t101" style="top:751.8px;font-size:6.4px;line-height:9px;height:9px;color:#9a9a9a;left:1404.5px;">dB</div>
<div class="a" id="t102" style="top:763.3px;font-size:7.5px;line-height:10px;height:10px;color:#d0d0d0;left:1361px;font-weight:700;">S</div>
<div class="a" id="t103" style="top:763.3px;font-size:7.5px;line-height:10px;height:10px;color:#d0d0d0;left:1383.3px;font-weight:700;">S</div>
<!-- OVERLAYS -->
<div class="a" style="left:1206.300px;top:583.800px;width:95.300px;height:92.800px;border-radius:10px;background:linear-gradient(135deg,#c4c4c4 0%,#aaaaaa 45%,#7d7d7d 100%);box-shadow:0 0 1.500px rgba(0,0,0,.6)"></div>
<div class="a" style="left:1206.300px;top:583.800px;width:95.300px;height:92.800px;border-radius:10px;background:linear-gradient(180deg,rgba(255,255,255,.25) 0%,rgba(255,255,255,0) 12%,rgba(0,0,0,0) 85%,rgba(0,0,0,.28) 100%)"></div>
<div class="a" style="left:1213.500px;top:589px;width:80px;height:78.500px;border-radius:7px;background:linear-gradient(135deg,#dadada 0%,#cfcfcf 50%,#bdbdbd 100%);box-shadow:0 0 2px 1px rgba(200,200,200,.7)"></div>
<div class="a" id="t104" style="top:589.7px;font-size:69.5px;line-height:80px;height:80px;color:#050505;left:1225.2px;">M</div>
<div class="a" id="t105" style="top:755.0px;font-size:17.4px;line-height:24px;height:24px;color:rgba(235,235,235,.47);left:1239px;letter-spacing:0.402px;">@稀土掘金技术社区</div>
<svg style="left:824px;top:562px;" width="9" height="15" viewBox="0 0 9 15"><path d="M0.500 0.500v11.500l2.700-2.500 1.900 4.500 1.800-0.800-1.900-4.300h3.700z" fill="#fff" stroke="#111" stroke-width="0.800"/></svg>
</body>
</html>
